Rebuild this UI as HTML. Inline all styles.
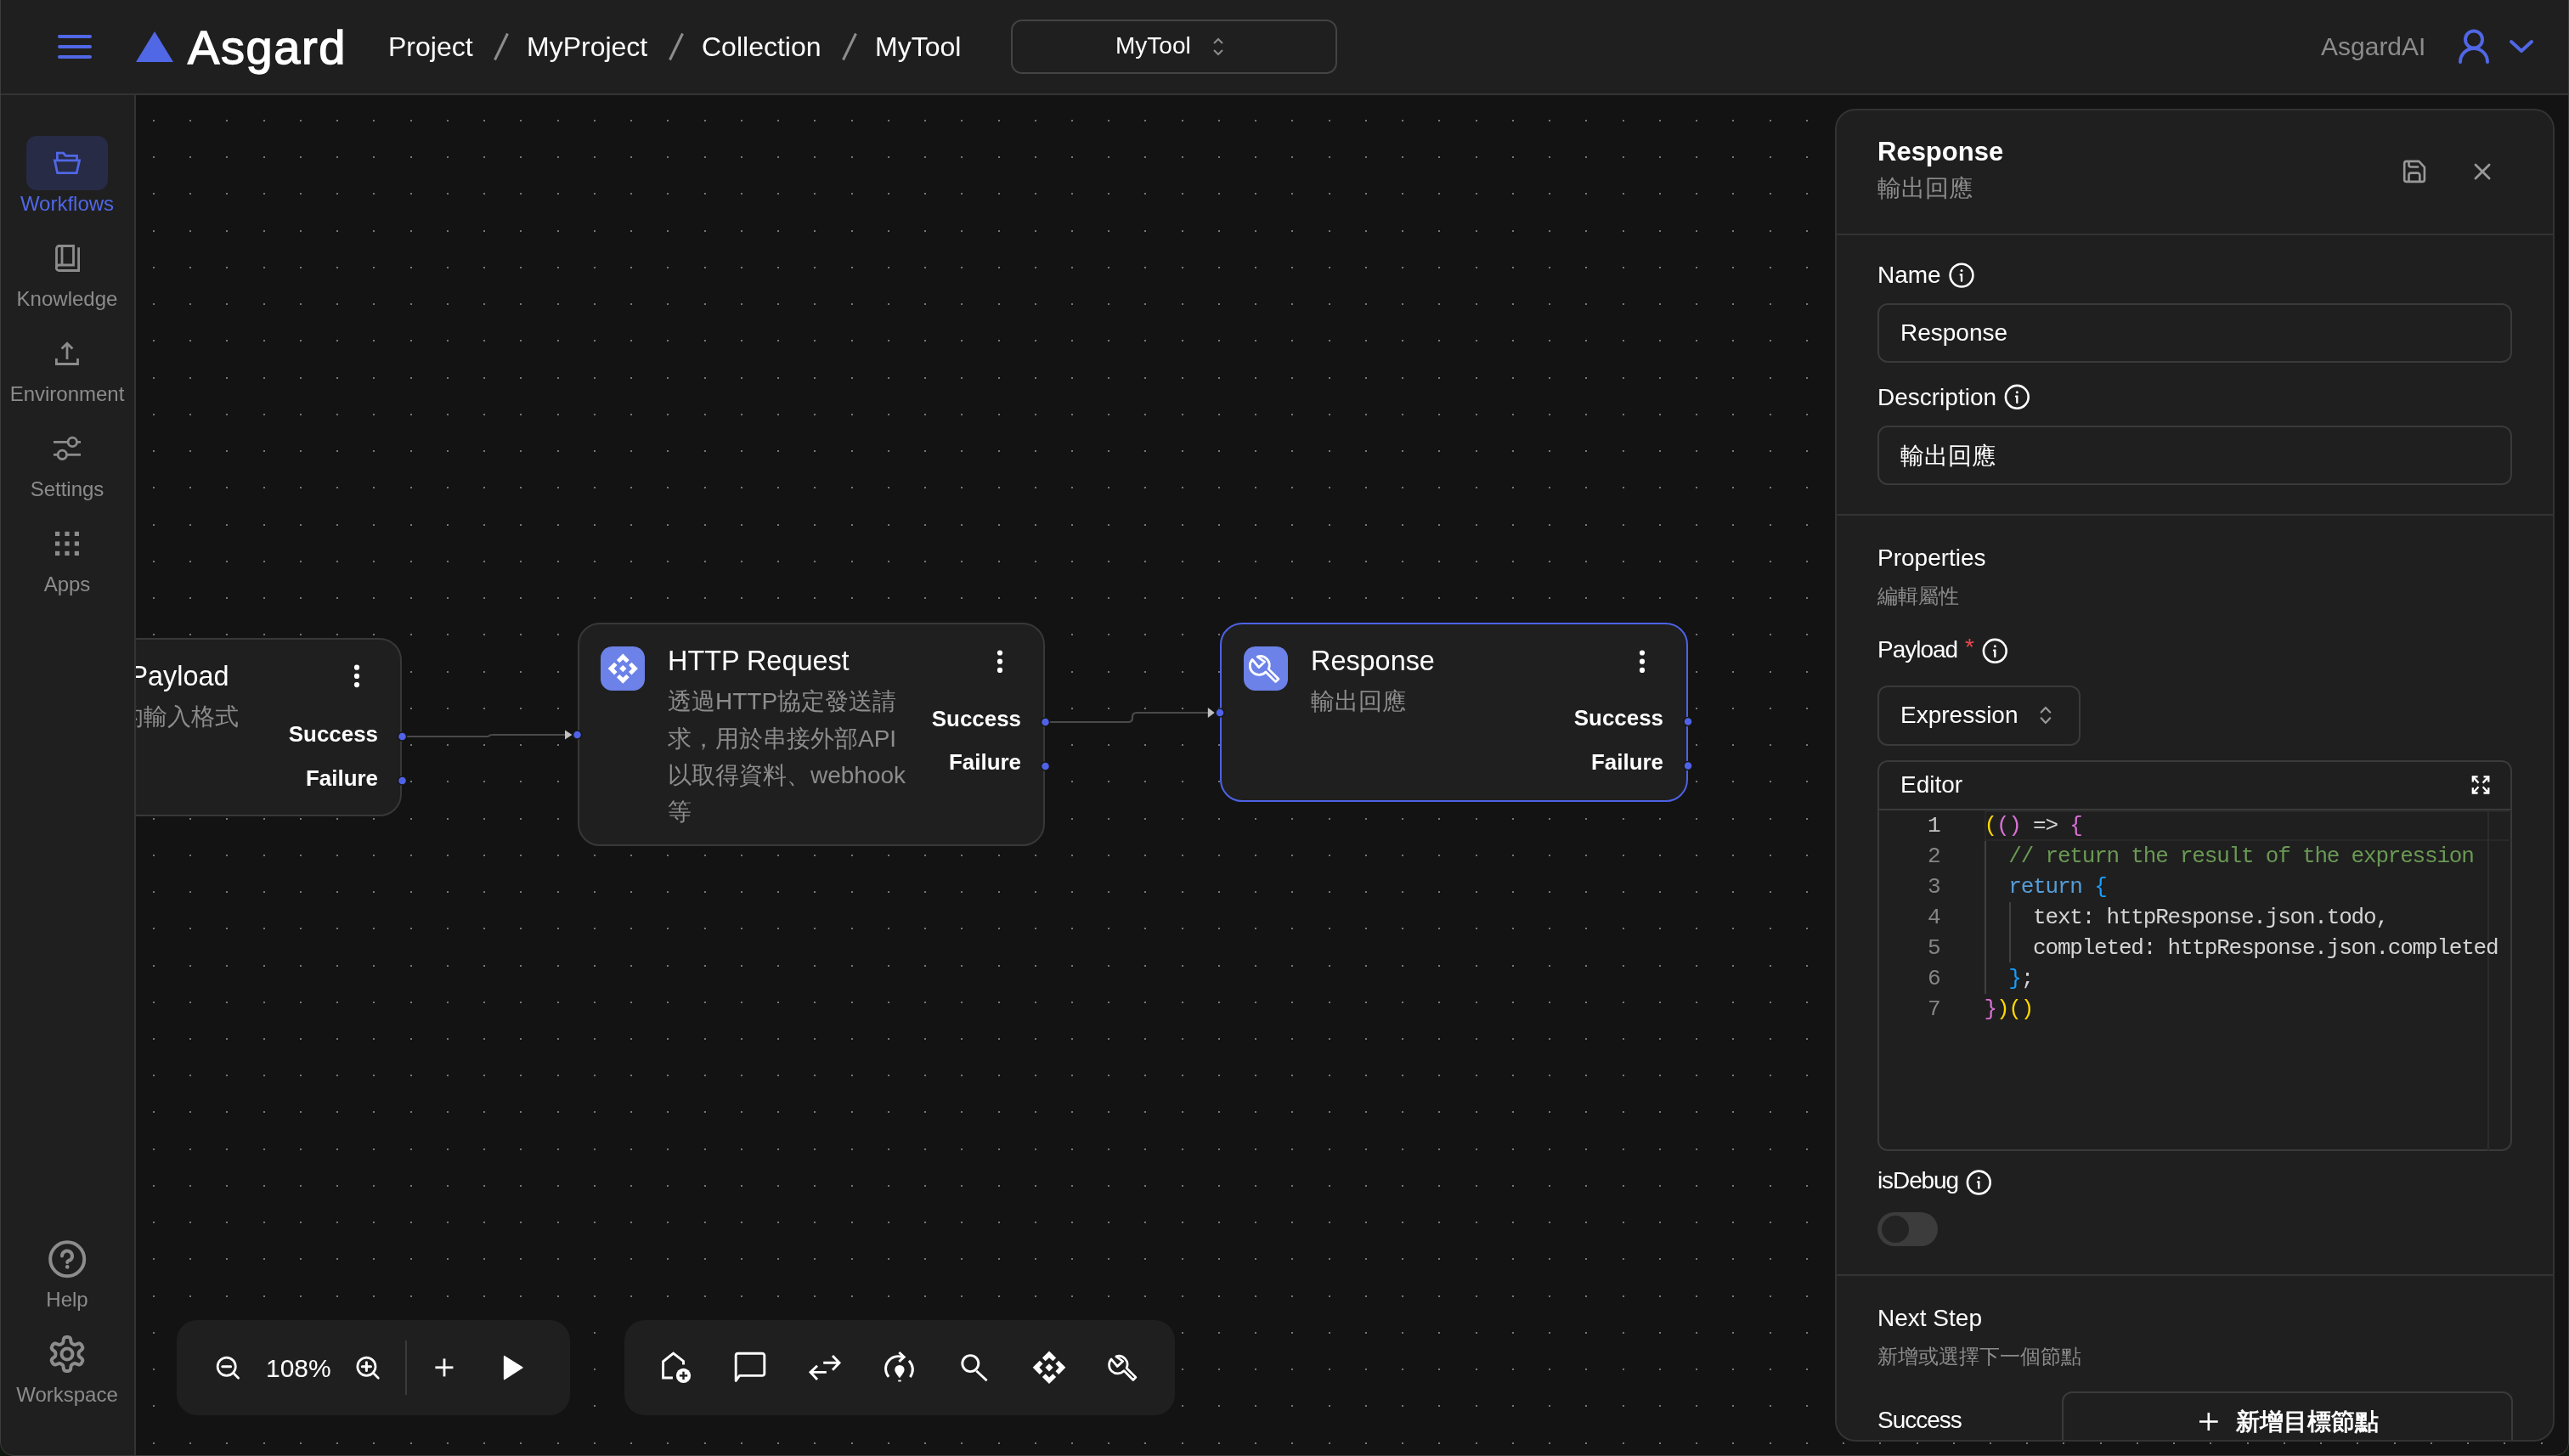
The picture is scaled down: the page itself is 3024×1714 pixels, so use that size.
<!DOCTYPE html>
<html><head><meta charset="utf-8">
<style>
html,body{margin:0;padding:0;}
body{width:3024px;height:1714px;overflow:hidden;background:#111a10;font-family:"Liberation Sans",sans-serif;color:#fff;position:relative;}
#win{position:absolute;left:0;top:0;width:3024px;height:1714px;overflow:hidden;background:#131313;border-radius:0 0 16px 16px;will-change:transform;-webkit-font-smoothing:antialiased;}
.a{position:absolute;}
.t{position:absolute;line-height:1;white-space:nowrap;}
svg{position:absolute;overflow:visible;}
#hdr{left:0;top:0;width:3024px;height:110px;background:#1f1f1f;border-bottom:2px solid #333;}
#side{left:0;top:112px;width:158px;height:1602px;background:#1f1f1f;border-right:2px solid #333;}
#frameL{left:0;top:0;width:1px;height:1714px;background:#3a3a3a;}
#frameR{left:3023px;top:0;width:1px;height:1714px;background:#3a3a3a;}
.g{color:#8c8c8c;}
</style></head><body><div id="win">

<!-- canvas dots -->
<svg class="a" style="left:0;top:0" width="3024" height="1714"><path d="M180 141h2v2h-2zM223 141h2v2h-2zM266 141h2v2h-2zM310 141h2v2h-2zM353 141h2v2h-2zM396 141h2v2h-2zM439 141h2v2h-2zM483 141h2v2h-2zM526 141h2v2h-2zM569 141h2v2h-2zM612 141h2v2h-2zM656 141h2v2h-2zM699 141h2v2h-2zM742 141h2v2h-2zM785 141h2v2h-2zM829 141h2v2h-2zM872 141h2v2h-2zM915 141h2v2h-2zM958 141h2v2h-2zM1002 141h2v2h-2zM1045 141h2v2h-2zM1088 141h2v2h-2zM1131 141h2v2h-2zM1175 141h2v2h-2zM1218 141h2v2h-2zM1261 141h2v2h-2zM1304 141h2v2h-2zM1347 141h2v2h-2zM1391 141h2v2h-2zM1434 141h2v2h-2zM1477 141h2v2h-2zM1520 141h2v2h-2zM1564 141h2v2h-2zM1607 141h2v2h-2zM1650 141h2v2h-2zM1693 141h2v2h-2zM1737 141h2v2h-2zM1780 141h2v2h-2zM1823 141h2v2h-2zM1866 141h2v2h-2zM1910 141h2v2h-2zM1953 141h2v2h-2zM1996 141h2v2h-2zM2039 141h2v2h-2zM2083 141h2v2h-2zM2126 141h2v2h-2zM2169 141h2v2h-2zM2212 141h2v2h-2zM2256 141h2v2h-2zM2299 141h2v2h-2zM2342 141h2v2h-2zM2385 141h2v2h-2zM2428 141h2v2h-2zM2472 141h2v2h-2zM2515 141h2v2h-2zM2558 141h2v2h-2zM2601 141h2v2h-2zM2645 141h2v2h-2zM2688 141h2v2h-2zM2731 141h2v2h-2zM2774 141h2v2h-2zM2818 141h2v2h-2zM2861 141h2v2h-2zM2904 141h2v2h-2zM2947 141h2v2h-2zM2991 141h2v2h-2zM180 184h2v2h-2zM223 184h2v2h-2zM266 184h2v2h-2zM310 184h2v2h-2zM353 184h2v2h-2zM396 184h2v2h-2zM439 184h2v2h-2zM483 184h2v2h-2zM526 184h2v2h-2zM569 184h2v2h-2zM612 184h2v2h-2zM656 184h2v2h-2zM699 184h2v2h-2zM742 184h2v2h-2zM785 184h2v2h-2zM829 184h2v2h-2zM872 184h2v2h-2zM915 184h2v2h-2zM958 184h2v2h-2zM1002 184h2v2h-2zM1045 184h2v2h-2zM1088 184h2v2h-2zM1131 184h2v2h-2zM1175 184h2v2h-2zM1218 184h2v2h-2zM1261 184h2v2h-2zM1304 184h2v2h-2zM1347 184h2v2h-2zM1391 184h2v2h-2zM1434 184h2v2h-2zM1477 184h2v2h-2zM1520 184h2v2h-2zM1564 184h2v2h-2zM1607 184h2v2h-2zM1650 184h2v2h-2zM1693 184h2v2h-2zM1737 184h2v2h-2zM1780 184h2v2h-2zM1823 184h2v2h-2zM1866 184h2v2h-2zM1910 184h2v2h-2zM1953 184h2v2h-2zM1996 184h2v2h-2zM2039 184h2v2h-2zM2083 184h2v2h-2zM2126 184h2v2h-2zM2169 184h2v2h-2zM2212 184h2v2h-2zM2256 184h2v2h-2zM2299 184h2v2h-2zM2342 184h2v2h-2zM2385 184h2v2h-2zM2428 184h2v2h-2zM2472 184h2v2h-2zM2515 184h2v2h-2zM2558 184h2v2h-2zM2601 184h2v2h-2zM2645 184h2v2h-2zM2688 184h2v2h-2zM2731 184h2v2h-2zM2774 184h2v2h-2zM2818 184h2v2h-2zM2861 184h2v2h-2zM2904 184h2v2h-2zM2947 184h2v2h-2zM2991 184h2v2h-2zM180 227h2v2h-2zM223 227h2v2h-2zM266 227h2v2h-2zM310 227h2v2h-2zM353 227h2v2h-2zM396 227h2v2h-2zM439 227h2v2h-2zM483 227h2v2h-2zM526 227h2v2h-2zM569 227h2v2h-2zM612 227h2v2h-2zM656 227h2v2h-2zM699 227h2v2h-2zM742 227h2v2h-2zM785 227h2v2h-2zM829 227h2v2h-2zM872 227h2v2h-2zM915 227h2v2h-2zM958 227h2v2h-2zM1002 227h2v2h-2zM1045 227h2v2h-2zM1088 227h2v2h-2zM1131 227h2v2h-2zM1175 227h2v2h-2zM1218 227h2v2h-2zM1261 227h2v2h-2zM1304 227h2v2h-2zM1347 227h2v2h-2zM1391 227h2v2h-2zM1434 227h2v2h-2zM1477 227h2v2h-2zM1520 227h2v2h-2zM1564 227h2v2h-2zM1607 227h2v2h-2zM1650 227h2v2h-2zM1693 227h2v2h-2zM1737 227h2v2h-2zM1780 227h2v2h-2zM1823 227h2v2h-2zM1866 227h2v2h-2zM1910 227h2v2h-2zM1953 227h2v2h-2zM1996 227h2v2h-2zM2039 227h2v2h-2zM2083 227h2v2h-2zM2126 227h2v2h-2zM2169 227h2v2h-2zM2212 227h2v2h-2zM2256 227h2v2h-2zM2299 227h2v2h-2zM2342 227h2v2h-2zM2385 227h2v2h-2zM2428 227h2v2h-2zM2472 227h2v2h-2zM2515 227h2v2h-2zM2558 227h2v2h-2zM2601 227h2v2h-2zM2645 227h2v2h-2zM2688 227h2v2h-2zM2731 227h2v2h-2zM2774 227h2v2h-2zM2818 227h2v2h-2zM2861 227h2v2h-2zM2904 227h2v2h-2zM2947 227h2v2h-2zM2991 227h2v2h-2zM180 271h2v2h-2zM223 271h2v2h-2zM266 271h2v2h-2zM310 271h2v2h-2zM353 271h2v2h-2zM396 271h2v2h-2zM439 271h2v2h-2zM483 271h2v2h-2zM526 271h2v2h-2zM569 271h2v2h-2zM612 271h2v2h-2zM656 271h2v2h-2zM699 271h2v2h-2zM742 271h2v2h-2zM785 271h2v2h-2zM829 271h2v2h-2zM872 271h2v2h-2zM915 271h2v2h-2zM958 271h2v2h-2zM1002 271h2v2h-2zM1045 271h2v2h-2zM1088 271h2v2h-2zM1131 271h2v2h-2zM1175 271h2v2h-2zM1218 271h2v2h-2zM1261 271h2v2h-2zM1304 271h2v2h-2zM1347 271h2v2h-2zM1391 271h2v2h-2zM1434 271h2v2h-2zM1477 271h2v2h-2zM1520 271h2v2h-2zM1564 271h2v2h-2zM1607 271h2v2h-2zM1650 271h2v2h-2zM1693 271h2v2h-2zM1737 271h2v2h-2zM1780 271h2v2h-2zM1823 271h2v2h-2zM1866 271h2v2h-2zM1910 271h2v2h-2zM1953 271h2v2h-2zM1996 271h2v2h-2zM2039 271h2v2h-2zM2083 271h2v2h-2zM2126 271h2v2h-2zM2169 271h2v2h-2zM2212 271h2v2h-2zM2256 271h2v2h-2zM2299 271h2v2h-2zM2342 271h2v2h-2zM2385 271h2v2h-2zM2428 271h2v2h-2zM2472 271h2v2h-2zM2515 271h2v2h-2zM2558 271h2v2h-2zM2601 271h2v2h-2zM2645 271h2v2h-2zM2688 271h2v2h-2zM2731 271h2v2h-2zM2774 271h2v2h-2zM2818 271h2v2h-2zM2861 271h2v2h-2zM2904 271h2v2h-2zM2947 271h2v2h-2zM2991 271h2v2h-2zM180 314h2v2h-2zM223 314h2v2h-2zM266 314h2v2h-2zM310 314h2v2h-2zM353 314h2v2h-2zM396 314h2v2h-2zM439 314h2v2h-2zM483 314h2v2h-2zM526 314h2v2h-2zM569 314h2v2h-2zM612 314h2v2h-2zM656 314h2v2h-2zM699 314h2v2h-2zM742 314h2v2h-2zM785 314h2v2h-2zM829 314h2v2h-2zM872 314h2v2h-2zM915 314h2v2h-2zM958 314h2v2h-2zM1002 314h2v2h-2zM1045 314h2v2h-2zM1088 314h2v2h-2zM1131 314h2v2h-2zM1175 314h2v2h-2zM1218 314h2v2h-2zM1261 314h2v2h-2zM1304 314h2v2h-2zM1347 314h2v2h-2zM1391 314h2v2h-2zM1434 314h2v2h-2zM1477 314h2v2h-2zM1520 314h2v2h-2zM1564 314h2v2h-2zM1607 314h2v2h-2zM1650 314h2v2h-2zM1693 314h2v2h-2zM1737 314h2v2h-2zM1780 314h2v2h-2zM1823 314h2v2h-2zM1866 314h2v2h-2zM1910 314h2v2h-2zM1953 314h2v2h-2zM1996 314h2v2h-2zM2039 314h2v2h-2zM2083 314h2v2h-2zM2126 314h2v2h-2zM2169 314h2v2h-2zM2212 314h2v2h-2zM2256 314h2v2h-2zM2299 314h2v2h-2zM2342 314h2v2h-2zM2385 314h2v2h-2zM2428 314h2v2h-2zM2472 314h2v2h-2zM2515 314h2v2h-2zM2558 314h2v2h-2zM2601 314h2v2h-2zM2645 314h2v2h-2zM2688 314h2v2h-2zM2731 314h2v2h-2zM2774 314h2v2h-2zM2818 314h2v2h-2zM2861 314h2v2h-2zM2904 314h2v2h-2zM2947 314h2v2h-2zM2991 314h2v2h-2zM180 357h2v2h-2zM223 357h2v2h-2zM266 357h2v2h-2zM310 357h2v2h-2zM353 357h2v2h-2zM396 357h2v2h-2zM439 357h2v2h-2zM483 357h2v2h-2zM526 357h2v2h-2zM569 357h2v2h-2zM612 357h2v2h-2zM656 357h2v2h-2zM699 357h2v2h-2zM742 357h2v2h-2zM785 357h2v2h-2zM829 357h2v2h-2zM872 357h2v2h-2zM915 357h2v2h-2zM958 357h2v2h-2zM1002 357h2v2h-2zM1045 357h2v2h-2zM1088 357h2v2h-2zM1131 357h2v2h-2zM1175 357h2v2h-2zM1218 357h2v2h-2zM1261 357h2v2h-2zM1304 357h2v2h-2zM1347 357h2v2h-2zM1391 357h2v2h-2zM1434 357h2v2h-2zM1477 357h2v2h-2zM1520 357h2v2h-2zM1564 357h2v2h-2zM1607 357h2v2h-2zM1650 357h2v2h-2zM1693 357h2v2h-2zM1737 357h2v2h-2zM1780 357h2v2h-2zM1823 357h2v2h-2zM1866 357h2v2h-2zM1910 357h2v2h-2zM1953 357h2v2h-2zM1996 357h2v2h-2zM2039 357h2v2h-2zM2083 357h2v2h-2zM2126 357h2v2h-2zM2169 357h2v2h-2zM2212 357h2v2h-2zM2256 357h2v2h-2zM2299 357h2v2h-2zM2342 357h2v2h-2zM2385 357h2v2h-2zM2428 357h2v2h-2zM2472 357h2v2h-2zM2515 357h2v2h-2zM2558 357h2v2h-2zM2601 357h2v2h-2zM2645 357h2v2h-2zM2688 357h2v2h-2zM2731 357h2v2h-2zM2774 357h2v2h-2zM2818 357h2v2h-2zM2861 357h2v2h-2zM2904 357h2v2h-2zM2947 357h2v2h-2zM2991 357h2v2h-2zM180 400h2v2h-2zM223 400h2v2h-2zM266 400h2v2h-2zM310 400h2v2h-2zM353 400h2v2h-2zM396 400h2v2h-2zM439 400h2v2h-2zM483 400h2v2h-2zM526 400h2v2h-2zM569 400h2v2h-2zM612 400h2v2h-2zM656 400h2v2h-2zM699 400h2v2h-2zM742 400h2v2h-2zM785 400h2v2h-2zM829 400h2v2h-2zM872 400h2v2h-2zM915 400h2v2h-2zM958 400h2v2h-2zM1002 400h2v2h-2zM1045 400h2v2h-2zM1088 400h2v2h-2zM1131 400h2v2h-2zM1175 400h2v2h-2zM1218 400h2v2h-2zM1261 400h2v2h-2zM1304 400h2v2h-2zM1347 400h2v2h-2zM1391 400h2v2h-2zM1434 400h2v2h-2zM1477 400h2v2h-2zM1520 400h2v2h-2zM1564 400h2v2h-2zM1607 400h2v2h-2zM1650 400h2v2h-2zM1693 400h2v2h-2zM1737 400h2v2h-2zM1780 400h2v2h-2zM1823 400h2v2h-2zM1866 400h2v2h-2zM1910 400h2v2h-2zM1953 400h2v2h-2zM1996 400h2v2h-2zM2039 400h2v2h-2zM2083 400h2v2h-2zM2126 400h2v2h-2zM2169 400h2v2h-2zM2212 400h2v2h-2zM2256 400h2v2h-2zM2299 400h2v2h-2zM2342 400h2v2h-2zM2385 400h2v2h-2zM2428 400h2v2h-2zM2472 400h2v2h-2zM2515 400h2v2h-2zM2558 400h2v2h-2zM2601 400h2v2h-2zM2645 400h2v2h-2zM2688 400h2v2h-2zM2731 400h2v2h-2zM2774 400h2v2h-2zM2818 400h2v2h-2zM2861 400h2v2h-2zM2904 400h2v2h-2zM2947 400h2v2h-2zM2991 400h2v2h-2zM180 444h2v2h-2zM223 444h2v2h-2zM266 444h2v2h-2zM310 444h2v2h-2zM353 444h2v2h-2zM396 444h2v2h-2zM439 444h2v2h-2zM483 444h2v2h-2zM526 444h2v2h-2zM569 444h2v2h-2zM612 444h2v2h-2zM656 444h2v2h-2zM699 444h2v2h-2zM742 444h2v2h-2zM785 444h2v2h-2zM829 444h2v2h-2zM872 444h2v2h-2zM915 444h2v2h-2zM958 444h2v2h-2zM1002 444h2v2h-2zM1045 444h2v2h-2zM1088 444h2v2h-2zM1131 444h2v2h-2zM1175 444h2v2h-2zM1218 444h2v2h-2zM1261 444h2v2h-2zM1304 444h2v2h-2zM1347 444h2v2h-2zM1391 444h2v2h-2zM1434 444h2v2h-2zM1477 444h2v2h-2zM1520 444h2v2h-2zM1564 444h2v2h-2zM1607 444h2v2h-2zM1650 444h2v2h-2zM1693 444h2v2h-2zM1737 444h2v2h-2zM1780 444h2v2h-2zM1823 444h2v2h-2zM1866 444h2v2h-2zM1910 444h2v2h-2zM1953 444h2v2h-2zM1996 444h2v2h-2zM2039 444h2v2h-2zM2083 444h2v2h-2zM2126 444h2v2h-2zM2169 444h2v2h-2zM2212 444h2v2h-2zM2256 444h2v2h-2zM2299 444h2v2h-2zM2342 444h2v2h-2zM2385 444h2v2h-2zM2428 444h2v2h-2zM2472 444h2v2h-2zM2515 444h2v2h-2zM2558 444h2v2h-2zM2601 444h2v2h-2zM2645 444h2v2h-2zM2688 444h2v2h-2zM2731 444h2v2h-2zM2774 444h2v2h-2zM2818 444h2v2h-2zM2861 444h2v2h-2zM2904 444h2v2h-2zM2947 444h2v2h-2zM2991 444h2v2h-2zM180 487h2v2h-2zM223 487h2v2h-2zM266 487h2v2h-2zM310 487h2v2h-2zM353 487h2v2h-2zM396 487h2v2h-2zM439 487h2v2h-2zM483 487h2v2h-2zM526 487h2v2h-2zM569 487h2v2h-2zM612 487h2v2h-2zM656 487h2v2h-2zM699 487h2v2h-2zM742 487h2v2h-2zM785 487h2v2h-2zM829 487h2v2h-2zM872 487h2v2h-2zM915 487h2v2h-2zM958 487h2v2h-2zM1002 487h2v2h-2zM1045 487h2v2h-2zM1088 487h2v2h-2zM1131 487h2v2h-2zM1175 487h2v2h-2zM1218 487h2v2h-2zM1261 487h2v2h-2zM1304 487h2v2h-2zM1347 487h2v2h-2zM1391 487h2v2h-2zM1434 487h2v2h-2zM1477 487h2v2h-2zM1520 487h2v2h-2zM1564 487h2v2h-2zM1607 487h2v2h-2zM1650 487h2v2h-2zM1693 487h2v2h-2zM1737 487h2v2h-2zM1780 487h2v2h-2zM1823 487h2v2h-2zM1866 487h2v2h-2zM1910 487h2v2h-2zM1953 487h2v2h-2zM1996 487h2v2h-2zM2039 487h2v2h-2zM2083 487h2v2h-2zM2126 487h2v2h-2zM2169 487h2v2h-2zM2212 487h2v2h-2zM2256 487h2v2h-2zM2299 487h2v2h-2zM2342 487h2v2h-2zM2385 487h2v2h-2zM2428 487h2v2h-2zM2472 487h2v2h-2zM2515 487h2v2h-2zM2558 487h2v2h-2zM2601 487h2v2h-2zM2645 487h2v2h-2zM2688 487h2v2h-2zM2731 487h2v2h-2zM2774 487h2v2h-2zM2818 487h2v2h-2zM2861 487h2v2h-2zM2904 487h2v2h-2zM2947 487h2v2h-2zM2991 487h2v2h-2zM180 530h2v2h-2zM223 530h2v2h-2zM266 530h2v2h-2zM310 530h2v2h-2zM353 530h2v2h-2zM396 530h2v2h-2zM439 530h2v2h-2zM483 530h2v2h-2zM526 530h2v2h-2zM569 530h2v2h-2zM612 530h2v2h-2zM656 530h2v2h-2zM699 530h2v2h-2zM742 530h2v2h-2zM785 530h2v2h-2zM829 530h2v2h-2zM872 530h2v2h-2zM915 530h2v2h-2zM958 530h2v2h-2zM1002 530h2v2h-2zM1045 530h2v2h-2zM1088 530h2v2h-2zM1131 530h2v2h-2zM1175 530h2v2h-2zM1218 530h2v2h-2zM1261 530h2v2h-2zM1304 530h2v2h-2zM1347 530h2v2h-2zM1391 530h2v2h-2zM1434 530h2v2h-2zM1477 530h2v2h-2zM1520 530h2v2h-2zM1564 530h2v2h-2zM1607 530h2v2h-2zM1650 530h2v2h-2zM1693 530h2v2h-2zM1737 530h2v2h-2zM1780 530h2v2h-2zM1823 530h2v2h-2zM1866 530h2v2h-2zM1910 530h2v2h-2zM1953 530h2v2h-2zM1996 530h2v2h-2zM2039 530h2v2h-2zM2083 530h2v2h-2zM2126 530h2v2h-2zM2169 530h2v2h-2zM2212 530h2v2h-2zM2256 530h2v2h-2zM2299 530h2v2h-2zM2342 530h2v2h-2zM2385 530h2v2h-2zM2428 530h2v2h-2zM2472 530h2v2h-2zM2515 530h2v2h-2zM2558 530h2v2h-2zM2601 530h2v2h-2zM2645 530h2v2h-2zM2688 530h2v2h-2zM2731 530h2v2h-2zM2774 530h2v2h-2zM2818 530h2v2h-2zM2861 530h2v2h-2zM2904 530h2v2h-2zM2947 530h2v2h-2zM2991 530h2v2h-2zM180 573h2v2h-2zM223 573h2v2h-2zM266 573h2v2h-2zM310 573h2v2h-2zM353 573h2v2h-2zM396 573h2v2h-2zM439 573h2v2h-2zM483 573h2v2h-2zM526 573h2v2h-2zM569 573h2v2h-2zM612 573h2v2h-2zM656 573h2v2h-2zM699 573h2v2h-2zM742 573h2v2h-2zM785 573h2v2h-2zM829 573h2v2h-2zM872 573h2v2h-2zM915 573h2v2h-2zM958 573h2v2h-2zM1002 573h2v2h-2zM1045 573h2v2h-2zM1088 573h2v2h-2zM1131 573h2v2h-2zM1175 573h2v2h-2zM1218 573h2v2h-2zM1261 573h2v2h-2zM1304 573h2v2h-2zM1347 573h2v2h-2zM1391 573h2v2h-2zM1434 573h2v2h-2zM1477 573h2v2h-2zM1520 573h2v2h-2zM1564 573h2v2h-2zM1607 573h2v2h-2zM1650 573h2v2h-2zM1693 573h2v2h-2zM1737 573h2v2h-2zM1780 573h2v2h-2zM1823 573h2v2h-2zM1866 573h2v2h-2zM1910 573h2v2h-2zM1953 573h2v2h-2zM1996 573h2v2h-2zM2039 573h2v2h-2zM2083 573h2v2h-2zM2126 573h2v2h-2zM2169 573h2v2h-2zM2212 573h2v2h-2zM2256 573h2v2h-2zM2299 573h2v2h-2zM2342 573h2v2h-2zM2385 573h2v2h-2zM2428 573h2v2h-2zM2472 573h2v2h-2zM2515 573h2v2h-2zM2558 573h2v2h-2zM2601 573h2v2h-2zM2645 573h2v2h-2zM2688 573h2v2h-2zM2731 573h2v2h-2zM2774 573h2v2h-2zM2818 573h2v2h-2zM2861 573h2v2h-2zM2904 573h2v2h-2zM2947 573h2v2h-2zM2991 573h2v2h-2zM180 617h2v2h-2zM223 617h2v2h-2zM266 617h2v2h-2zM310 617h2v2h-2zM353 617h2v2h-2zM396 617h2v2h-2zM439 617h2v2h-2zM483 617h2v2h-2zM526 617h2v2h-2zM569 617h2v2h-2zM612 617h2v2h-2zM656 617h2v2h-2zM699 617h2v2h-2zM742 617h2v2h-2zM785 617h2v2h-2zM829 617h2v2h-2zM872 617h2v2h-2zM915 617h2v2h-2zM958 617h2v2h-2zM1002 617h2v2h-2zM1045 617h2v2h-2zM1088 617h2v2h-2zM1131 617h2v2h-2zM1175 617h2v2h-2zM1218 617h2v2h-2zM1261 617h2v2h-2zM1304 617h2v2h-2zM1347 617h2v2h-2zM1391 617h2v2h-2zM1434 617h2v2h-2zM1477 617h2v2h-2zM1520 617h2v2h-2zM1564 617h2v2h-2zM1607 617h2v2h-2zM1650 617h2v2h-2zM1693 617h2v2h-2zM1737 617h2v2h-2zM1780 617h2v2h-2zM1823 617h2v2h-2zM1866 617h2v2h-2zM1910 617h2v2h-2zM1953 617h2v2h-2zM1996 617h2v2h-2zM2039 617h2v2h-2zM2083 617h2v2h-2zM2126 617h2v2h-2zM2169 617h2v2h-2zM2212 617h2v2h-2zM2256 617h2v2h-2zM2299 617h2v2h-2zM2342 617h2v2h-2zM2385 617h2v2h-2zM2428 617h2v2h-2zM2472 617h2v2h-2zM2515 617h2v2h-2zM2558 617h2v2h-2zM2601 617h2v2h-2zM2645 617h2v2h-2zM2688 617h2v2h-2zM2731 617h2v2h-2zM2774 617h2v2h-2zM2818 617h2v2h-2zM2861 617h2v2h-2zM2904 617h2v2h-2zM2947 617h2v2h-2zM2991 617h2v2h-2zM180 660h2v2h-2zM223 660h2v2h-2zM266 660h2v2h-2zM310 660h2v2h-2zM353 660h2v2h-2zM396 660h2v2h-2zM439 660h2v2h-2zM483 660h2v2h-2zM526 660h2v2h-2zM569 660h2v2h-2zM612 660h2v2h-2zM656 660h2v2h-2zM699 660h2v2h-2zM742 660h2v2h-2zM785 660h2v2h-2zM829 660h2v2h-2zM872 660h2v2h-2zM915 660h2v2h-2zM958 660h2v2h-2zM1002 660h2v2h-2zM1045 660h2v2h-2zM1088 660h2v2h-2zM1131 660h2v2h-2zM1175 660h2v2h-2zM1218 660h2v2h-2zM1261 660h2v2h-2zM1304 660h2v2h-2zM1347 660h2v2h-2zM1391 660h2v2h-2zM1434 660h2v2h-2zM1477 660h2v2h-2zM1520 660h2v2h-2zM1564 660h2v2h-2zM1607 660h2v2h-2zM1650 660h2v2h-2zM1693 660h2v2h-2zM1737 660h2v2h-2zM1780 660h2v2h-2zM1823 660h2v2h-2zM1866 660h2v2h-2zM1910 660h2v2h-2zM1953 660h2v2h-2zM1996 660h2v2h-2zM2039 660h2v2h-2zM2083 660h2v2h-2zM2126 660h2v2h-2zM2169 660h2v2h-2zM2212 660h2v2h-2zM2256 660h2v2h-2zM2299 660h2v2h-2zM2342 660h2v2h-2zM2385 660h2v2h-2zM2428 660h2v2h-2zM2472 660h2v2h-2zM2515 660h2v2h-2zM2558 660h2v2h-2zM2601 660h2v2h-2zM2645 660h2v2h-2zM2688 660h2v2h-2zM2731 660h2v2h-2zM2774 660h2v2h-2zM2818 660h2v2h-2zM2861 660h2v2h-2zM2904 660h2v2h-2zM2947 660h2v2h-2zM2991 660h2v2h-2zM180 703h2v2h-2zM223 703h2v2h-2zM266 703h2v2h-2zM310 703h2v2h-2zM353 703h2v2h-2zM396 703h2v2h-2zM439 703h2v2h-2zM483 703h2v2h-2zM526 703h2v2h-2zM569 703h2v2h-2zM612 703h2v2h-2zM656 703h2v2h-2zM699 703h2v2h-2zM742 703h2v2h-2zM785 703h2v2h-2zM829 703h2v2h-2zM872 703h2v2h-2zM915 703h2v2h-2zM958 703h2v2h-2zM1002 703h2v2h-2zM1045 703h2v2h-2zM1088 703h2v2h-2zM1131 703h2v2h-2zM1175 703h2v2h-2zM1218 703h2v2h-2zM1261 703h2v2h-2zM1304 703h2v2h-2zM1347 703h2v2h-2zM1391 703h2v2h-2zM1434 703h2v2h-2zM1477 703h2v2h-2zM1520 703h2v2h-2zM1564 703h2v2h-2zM1607 703h2v2h-2zM1650 703h2v2h-2zM1693 703h2v2h-2zM1737 703h2v2h-2zM1780 703h2v2h-2zM1823 703h2v2h-2zM1866 703h2v2h-2zM1910 703h2v2h-2zM1953 703h2v2h-2zM1996 703h2v2h-2zM2039 703h2v2h-2zM2083 703h2v2h-2zM2126 703h2v2h-2zM2169 703h2v2h-2zM2212 703h2v2h-2zM2256 703h2v2h-2zM2299 703h2v2h-2zM2342 703h2v2h-2zM2385 703h2v2h-2zM2428 703h2v2h-2zM2472 703h2v2h-2zM2515 703h2v2h-2zM2558 703h2v2h-2zM2601 703h2v2h-2zM2645 703h2v2h-2zM2688 703h2v2h-2zM2731 703h2v2h-2zM2774 703h2v2h-2zM2818 703h2v2h-2zM2861 703h2v2h-2zM2904 703h2v2h-2zM2947 703h2v2h-2zM2991 703h2v2h-2zM180 746h2v2h-2zM223 746h2v2h-2zM266 746h2v2h-2zM310 746h2v2h-2zM353 746h2v2h-2zM396 746h2v2h-2zM439 746h2v2h-2zM483 746h2v2h-2zM526 746h2v2h-2zM569 746h2v2h-2zM612 746h2v2h-2zM656 746h2v2h-2zM699 746h2v2h-2zM742 746h2v2h-2zM785 746h2v2h-2zM829 746h2v2h-2zM872 746h2v2h-2zM915 746h2v2h-2zM958 746h2v2h-2zM1002 746h2v2h-2zM1045 746h2v2h-2zM1088 746h2v2h-2zM1131 746h2v2h-2zM1175 746h2v2h-2zM1218 746h2v2h-2zM1261 746h2v2h-2zM1304 746h2v2h-2zM1347 746h2v2h-2zM1391 746h2v2h-2zM1434 746h2v2h-2zM1477 746h2v2h-2zM1520 746h2v2h-2zM1564 746h2v2h-2zM1607 746h2v2h-2zM1650 746h2v2h-2zM1693 746h2v2h-2zM1737 746h2v2h-2zM1780 746h2v2h-2zM1823 746h2v2h-2zM1866 746h2v2h-2zM1910 746h2v2h-2zM1953 746h2v2h-2zM1996 746h2v2h-2zM2039 746h2v2h-2zM2083 746h2v2h-2zM2126 746h2v2h-2zM2169 746h2v2h-2zM2212 746h2v2h-2zM2256 746h2v2h-2zM2299 746h2v2h-2zM2342 746h2v2h-2zM2385 746h2v2h-2zM2428 746h2v2h-2zM2472 746h2v2h-2zM2515 746h2v2h-2zM2558 746h2v2h-2zM2601 746h2v2h-2zM2645 746h2v2h-2zM2688 746h2v2h-2zM2731 746h2v2h-2zM2774 746h2v2h-2zM2818 746h2v2h-2zM2861 746h2v2h-2zM2904 746h2v2h-2zM2947 746h2v2h-2zM2991 746h2v2h-2zM180 790h2v2h-2zM223 790h2v2h-2zM266 790h2v2h-2zM310 790h2v2h-2zM353 790h2v2h-2zM396 790h2v2h-2zM439 790h2v2h-2zM483 790h2v2h-2zM526 790h2v2h-2zM569 790h2v2h-2zM612 790h2v2h-2zM656 790h2v2h-2zM699 790h2v2h-2zM742 790h2v2h-2zM785 790h2v2h-2zM829 790h2v2h-2zM872 790h2v2h-2zM915 790h2v2h-2zM958 790h2v2h-2zM1002 790h2v2h-2zM1045 790h2v2h-2zM1088 790h2v2h-2zM1131 790h2v2h-2zM1175 790h2v2h-2zM1218 790h2v2h-2zM1261 790h2v2h-2zM1304 790h2v2h-2zM1347 790h2v2h-2zM1391 790h2v2h-2zM1434 790h2v2h-2zM1477 790h2v2h-2zM1520 790h2v2h-2zM1564 790h2v2h-2zM1607 790h2v2h-2zM1650 790h2v2h-2zM1693 790h2v2h-2zM1737 790h2v2h-2zM1780 790h2v2h-2zM1823 790h2v2h-2zM1866 790h2v2h-2zM1910 790h2v2h-2zM1953 790h2v2h-2zM1996 790h2v2h-2zM2039 790h2v2h-2zM2083 790h2v2h-2zM2126 790h2v2h-2zM2169 790h2v2h-2zM2212 790h2v2h-2zM2256 790h2v2h-2zM2299 790h2v2h-2zM2342 790h2v2h-2zM2385 790h2v2h-2zM2428 790h2v2h-2zM2472 790h2v2h-2zM2515 790h2v2h-2zM2558 790h2v2h-2zM2601 790h2v2h-2zM2645 790h2v2h-2zM2688 790h2v2h-2zM2731 790h2v2h-2zM2774 790h2v2h-2zM2818 790h2v2h-2zM2861 790h2v2h-2zM2904 790h2v2h-2zM2947 790h2v2h-2zM2991 790h2v2h-2zM180 833h2v2h-2zM223 833h2v2h-2zM266 833h2v2h-2zM310 833h2v2h-2zM353 833h2v2h-2zM396 833h2v2h-2zM439 833h2v2h-2zM483 833h2v2h-2zM526 833h2v2h-2zM569 833h2v2h-2zM612 833h2v2h-2zM656 833h2v2h-2zM699 833h2v2h-2zM742 833h2v2h-2zM785 833h2v2h-2zM829 833h2v2h-2zM872 833h2v2h-2zM915 833h2v2h-2zM958 833h2v2h-2zM1002 833h2v2h-2zM1045 833h2v2h-2zM1088 833h2v2h-2zM1131 833h2v2h-2zM1175 833h2v2h-2zM1218 833h2v2h-2zM1261 833h2v2h-2zM1304 833h2v2h-2zM1347 833h2v2h-2zM1391 833h2v2h-2zM1434 833h2v2h-2zM1477 833h2v2h-2zM1520 833h2v2h-2zM1564 833h2v2h-2zM1607 833h2v2h-2zM1650 833h2v2h-2zM1693 833h2v2h-2zM1737 833h2v2h-2zM1780 833h2v2h-2zM1823 833h2v2h-2zM1866 833h2v2h-2zM1910 833h2v2h-2zM1953 833h2v2h-2zM1996 833h2v2h-2zM2039 833h2v2h-2zM2083 833h2v2h-2zM2126 833h2v2h-2zM2169 833h2v2h-2zM2212 833h2v2h-2zM2256 833h2v2h-2zM2299 833h2v2h-2zM2342 833h2v2h-2zM2385 833h2v2h-2zM2428 833h2v2h-2zM2472 833h2v2h-2zM2515 833h2v2h-2zM2558 833h2v2h-2zM2601 833h2v2h-2zM2645 833h2v2h-2zM2688 833h2v2h-2zM2731 833h2v2h-2zM2774 833h2v2h-2zM2818 833h2v2h-2zM2861 833h2v2h-2zM2904 833h2v2h-2zM2947 833h2v2h-2zM2991 833h2v2h-2zM180 876h2v2h-2zM223 876h2v2h-2zM266 876h2v2h-2zM310 876h2v2h-2zM353 876h2v2h-2zM396 876h2v2h-2zM439 876h2v2h-2zM483 876h2v2h-2zM526 876h2v2h-2zM569 876h2v2h-2zM612 876h2v2h-2zM656 876h2v2h-2zM699 876h2v2h-2zM742 876h2v2h-2zM785 876h2v2h-2zM829 876h2v2h-2zM872 876h2v2h-2zM915 876h2v2h-2zM958 876h2v2h-2zM1002 876h2v2h-2zM1045 876h2v2h-2zM1088 876h2v2h-2zM1131 876h2v2h-2zM1175 876h2v2h-2zM1218 876h2v2h-2zM1261 876h2v2h-2zM1304 876h2v2h-2zM1347 876h2v2h-2zM1391 876h2v2h-2zM1434 876h2v2h-2zM1477 876h2v2h-2zM1520 876h2v2h-2zM1564 876h2v2h-2zM1607 876h2v2h-2zM1650 876h2v2h-2zM1693 876h2v2h-2zM1737 876h2v2h-2zM1780 876h2v2h-2zM1823 876h2v2h-2zM1866 876h2v2h-2zM1910 876h2v2h-2zM1953 876h2v2h-2zM1996 876h2v2h-2zM2039 876h2v2h-2zM2083 876h2v2h-2zM2126 876h2v2h-2zM2169 876h2v2h-2zM2212 876h2v2h-2zM2256 876h2v2h-2zM2299 876h2v2h-2zM2342 876h2v2h-2zM2385 876h2v2h-2zM2428 876h2v2h-2zM2472 876h2v2h-2zM2515 876h2v2h-2zM2558 876h2v2h-2zM2601 876h2v2h-2zM2645 876h2v2h-2zM2688 876h2v2h-2zM2731 876h2v2h-2zM2774 876h2v2h-2zM2818 876h2v2h-2zM2861 876h2v2h-2zM2904 876h2v2h-2zM2947 876h2v2h-2zM2991 876h2v2h-2zM180 919h2v2h-2zM223 919h2v2h-2zM266 919h2v2h-2zM310 919h2v2h-2zM353 919h2v2h-2zM396 919h2v2h-2zM439 919h2v2h-2zM483 919h2v2h-2zM526 919h2v2h-2zM569 919h2v2h-2zM612 919h2v2h-2zM656 919h2v2h-2zM699 919h2v2h-2zM742 919h2v2h-2zM785 919h2v2h-2zM829 919h2v2h-2zM872 919h2v2h-2zM915 919h2v2h-2zM958 919h2v2h-2zM1002 919h2v2h-2zM1045 919h2v2h-2zM1088 919h2v2h-2zM1131 919h2v2h-2zM1175 919h2v2h-2zM1218 919h2v2h-2zM1261 919h2v2h-2zM1304 919h2v2h-2zM1347 919h2v2h-2zM1391 919h2v2h-2zM1434 919h2v2h-2zM1477 919h2v2h-2zM1520 919h2v2h-2zM1564 919h2v2h-2zM1607 919h2v2h-2zM1650 919h2v2h-2zM1693 919h2v2h-2zM1737 919h2v2h-2zM1780 919h2v2h-2zM1823 919h2v2h-2zM1866 919h2v2h-2zM1910 919h2v2h-2zM1953 919h2v2h-2zM1996 919h2v2h-2zM2039 919h2v2h-2zM2083 919h2v2h-2zM2126 919h2v2h-2zM2169 919h2v2h-2zM2212 919h2v2h-2zM2256 919h2v2h-2zM2299 919h2v2h-2zM2342 919h2v2h-2zM2385 919h2v2h-2zM2428 919h2v2h-2zM2472 919h2v2h-2zM2515 919h2v2h-2zM2558 919h2v2h-2zM2601 919h2v2h-2zM2645 919h2v2h-2zM2688 919h2v2h-2zM2731 919h2v2h-2zM2774 919h2v2h-2zM2818 919h2v2h-2zM2861 919h2v2h-2zM2904 919h2v2h-2zM2947 919h2v2h-2zM2991 919h2v2h-2zM180 963h2v2h-2zM223 963h2v2h-2zM266 963h2v2h-2zM310 963h2v2h-2zM353 963h2v2h-2zM396 963h2v2h-2zM439 963h2v2h-2zM483 963h2v2h-2zM526 963h2v2h-2zM569 963h2v2h-2zM612 963h2v2h-2zM656 963h2v2h-2zM699 963h2v2h-2zM742 963h2v2h-2zM785 963h2v2h-2zM829 963h2v2h-2zM872 963h2v2h-2zM915 963h2v2h-2zM958 963h2v2h-2zM1002 963h2v2h-2zM1045 963h2v2h-2zM1088 963h2v2h-2zM1131 963h2v2h-2zM1175 963h2v2h-2zM1218 963h2v2h-2zM1261 963h2v2h-2zM1304 963h2v2h-2zM1347 963h2v2h-2zM1391 963h2v2h-2zM1434 963h2v2h-2zM1477 963h2v2h-2zM1520 963h2v2h-2zM1564 963h2v2h-2zM1607 963h2v2h-2zM1650 963h2v2h-2zM1693 963h2v2h-2zM1737 963h2v2h-2zM1780 963h2v2h-2zM1823 963h2v2h-2zM1866 963h2v2h-2zM1910 963h2v2h-2zM1953 963h2v2h-2zM1996 963h2v2h-2zM2039 963h2v2h-2zM2083 963h2v2h-2zM2126 963h2v2h-2zM2169 963h2v2h-2zM2212 963h2v2h-2zM2256 963h2v2h-2zM2299 963h2v2h-2zM2342 963h2v2h-2zM2385 963h2v2h-2zM2428 963h2v2h-2zM2472 963h2v2h-2zM2515 963h2v2h-2zM2558 963h2v2h-2zM2601 963h2v2h-2zM2645 963h2v2h-2zM2688 963h2v2h-2zM2731 963h2v2h-2zM2774 963h2v2h-2zM2818 963h2v2h-2zM2861 963h2v2h-2zM2904 963h2v2h-2zM2947 963h2v2h-2zM2991 963h2v2h-2zM180 1006h2v2h-2zM223 1006h2v2h-2zM266 1006h2v2h-2zM310 1006h2v2h-2zM353 1006h2v2h-2zM396 1006h2v2h-2zM439 1006h2v2h-2zM483 1006h2v2h-2zM526 1006h2v2h-2zM569 1006h2v2h-2zM612 1006h2v2h-2zM656 1006h2v2h-2zM699 1006h2v2h-2zM742 1006h2v2h-2zM785 1006h2v2h-2zM829 1006h2v2h-2zM872 1006h2v2h-2zM915 1006h2v2h-2zM958 1006h2v2h-2zM1002 1006h2v2h-2zM1045 1006h2v2h-2zM1088 1006h2v2h-2zM1131 1006h2v2h-2zM1175 1006h2v2h-2zM1218 1006h2v2h-2zM1261 1006h2v2h-2zM1304 1006h2v2h-2zM1347 1006h2v2h-2zM1391 1006h2v2h-2zM1434 1006h2v2h-2zM1477 1006h2v2h-2zM1520 1006h2v2h-2zM1564 1006h2v2h-2zM1607 1006h2v2h-2zM1650 1006h2v2h-2zM1693 1006h2v2h-2zM1737 1006h2v2h-2zM1780 1006h2v2h-2zM1823 1006h2v2h-2zM1866 1006h2v2h-2zM1910 1006h2v2h-2zM1953 1006h2v2h-2zM1996 1006h2v2h-2zM2039 1006h2v2h-2zM2083 1006h2v2h-2zM2126 1006h2v2h-2zM2169 1006h2v2h-2zM2212 1006h2v2h-2zM2256 1006h2v2h-2zM2299 1006h2v2h-2zM2342 1006h2v2h-2zM2385 1006h2v2h-2zM2428 1006h2v2h-2zM2472 1006h2v2h-2zM2515 1006h2v2h-2zM2558 1006h2v2h-2zM2601 1006h2v2h-2zM2645 1006h2v2h-2zM2688 1006h2v2h-2zM2731 1006h2v2h-2zM2774 1006h2v2h-2zM2818 1006h2v2h-2zM2861 1006h2v2h-2zM2904 1006h2v2h-2zM2947 1006h2v2h-2zM2991 1006h2v2h-2zM180 1049h2v2h-2zM223 1049h2v2h-2zM266 1049h2v2h-2zM310 1049h2v2h-2zM353 1049h2v2h-2zM396 1049h2v2h-2zM439 1049h2v2h-2zM483 1049h2v2h-2zM526 1049h2v2h-2zM569 1049h2v2h-2zM612 1049h2v2h-2zM656 1049h2v2h-2zM699 1049h2v2h-2zM742 1049h2v2h-2zM785 1049h2v2h-2zM829 1049h2v2h-2zM872 1049h2v2h-2zM915 1049h2v2h-2zM958 1049h2v2h-2zM1002 1049h2v2h-2zM1045 1049h2v2h-2zM1088 1049h2v2h-2zM1131 1049h2v2h-2zM1175 1049h2v2h-2zM1218 1049h2v2h-2zM1261 1049h2v2h-2zM1304 1049h2v2h-2zM1347 1049h2v2h-2zM1391 1049h2v2h-2zM1434 1049h2v2h-2zM1477 1049h2v2h-2zM1520 1049h2v2h-2zM1564 1049h2v2h-2zM1607 1049h2v2h-2zM1650 1049h2v2h-2zM1693 1049h2v2h-2zM1737 1049h2v2h-2zM1780 1049h2v2h-2zM1823 1049h2v2h-2zM1866 1049h2v2h-2zM1910 1049h2v2h-2zM1953 1049h2v2h-2zM1996 1049h2v2h-2zM2039 1049h2v2h-2zM2083 1049h2v2h-2zM2126 1049h2v2h-2zM2169 1049h2v2h-2zM2212 1049h2v2h-2zM2256 1049h2v2h-2zM2299 1049h2v2h-2zM2342 1049h2v2h-2zM2385 1049h2v2h-2zM2428 1049h2v2h-2zM2472 1049h2v2h-2zM2515 1049h2v2h-2zM2558 1049h2v2h-2zM2601 1049h2v2h-2zM2645 1049h2v2h-2zM2688 1049h2v2h-2zM2731 1049h2v2h-2zM2774 1049h2v2h-2zM2818 1049h2v2h-2zM2861 1049h2v2h-2zM2904 1049h2v2h-2zM2947 1049h2v2h-2zM2991 1049h2v2h-2zM180 1092h2v2h-2zM223 1092h2v2h-2zM266 1092h2v2h-2zM310 1092h2v2h-2zM353 1092h2v2h-2zM396 1092h2v2h-2zM439 1092h2v2h-2zM483 1092h2v2h-2zM526 1092h2v2h-2zM569 1092h2v2h-2zM612 1092h2v2h-2zM656 1092h2v2h-2zM699 1092h2v2h-2zM742 1092h2v2h-2zM785 1092h2v2h-2zM829 1092h2v2h-2zM872 1092h2v2h-2zM915 1092h2v2h-2zM958 1092h2v2h-2zM1002 1092h2v2h-2zM1045 1092h2v2h-2zM1088 1092h2v2h-2zM1131 1092h2v2h-2zM1175 1092h2v2h-2zM1218 1092h2v2h-2zM1261 1092h2v2h-2zM1304 1092h2v2h-2zM1347 1092h2v2h-2zM1391 1092h2v2h-2zM1434 1092h2v2h-2zM1477 1092h2v2h-2zM1520 1092h2v2h-2zM1564 1092h2v2h-2zM1607 1092h2v2h-2zM1650 1092h2v2h-2zM1693 1092h2v2h-2zM1737 1092h2v2h-2zM1780 1092h2v2h-2zM1823 1092h2v2h-2zM1866 1092h2v2h-2zM1910 1092h2v2h-2zM1953 1092h2v2h-2zM1996 1092h2v2h-2zM2039 1092h2v2h-2zM2083 1092h2v2h-2zM2126 1092h2v2h-2zM2169 1092h2v2h-2zM2212 1092h2v2h-2zM2256 1092h2v2h-2zM2299 1092h2v2h-2zM2342 1092h2v2h-2zM2385 1092h2v2h-2zM2428 1092h2v2h-2zM2472 1092h2v2h-2zM2515 1092h2v2h-2zM2558 1092h2v2h-2zM2601 1092h2v2h-2zM2645 1092h2v2h-2zM2688 1092h2v2h-2zM2731 1092h2v2h-2zM2774 1092h2v2h-2zM2818 1092h2v2h-2zM2861 1092h2v2h-2zM2904 1092h2v2h-2zM2947 1092h2v2h-2zM2991 1092h2v2h-2zM180 1136h2v2h-2zM223 1136h2v2h-2zM266 1136h2v2h-2zM310 1136h2v2h-2zM353 1136h2v2h-2zM396 1136h2v2h-2zM439 1136h2v2h-2zM483 1136h2v2h-2zM526 1136h2v2h-2zM569 1136h2v2h-2zM612 1136h2v2h-2zM656 1136h2v2h-2zM699 1136h2v2h-2zM742 1136h2v2h-2zM785 1136h2v2h-2zM829 1136h2v2h-2zM872 1136h2v2h-2zM915 1136h2v2h-2zM958 1136h2v2h-2zM1002 1136h2v2h-2zM1045 1136h2v2h-2zM1088 1136h2v2h-2zM1131 1136h2v2h-2zM1175 1136h2v2h-2zM1218 1136h2v2h-2zM1261 1136h2v2h-2zM1304 1136h2v2h-2zM1347 1136h2v2h-2zM1391 1136h2v2h-2zM1434 1136h2v2h-2zM1477 1136h2v2h-2zM1520 1136h2v2h-2zM1564 1136h2v2h-2zM1607 1136h2v2h-2zM1650 1136h2v2h-2zM1693 1136h2v2h-2zM1737 1136h2v2h-2zM1780 1136h2v2h-2zM1823 1136h2v2h-2zM1866 1136h2v2h-2zM1910 1136h2v2h-2zM1953 1136h2v2h-2zM1996 1136h2v2h-2zM2039 1136h2v2h-2zM2083 1136h2v2h-2zM2126 1136h2v2h-2zM2169 1136h2v2h-2zM2212 1136h2v2h-2zM2256 1136h2v2h-2zM2299 1136h2v2h-2zM2342 1136h2v2h-2zM2385 1136h2v2h-2zM2428 1136h2v2h-2zM2472 1136h2v2h-2zM2515 1136h2v2h-2zM2558 1136h2v2h-2zM2601 1136h2v2h-2zM2645 1136h2v2h-2zM2688 1136h2v2h-2zM2731 1136h2v2h-2zM2774 1136h2v2h-2zM2818 1136h2v2h-2zM2861 1136h2v2h-2zM2904 1136h2v2h-2zM2947 1136h2v2h-2zM2991 1136h2v2h-2zM180 1179h2v2h-2zM223 1179h2v2h-2zM266 1179h2v2h-2zM310 1179h2v2h-2zM353 1179h2v2h-2zM396 1179h2v2h-2zM439 1179h2v2h-2zM483 1179h2v2h-2zM526 1179h2v2h-2zM569 1179h2v2h-2zM612 1179h2v2h-2zM656 1179h2v2h-2zM699 1179h2v2h-2zM742 1179h2v2h-2zM785 1179h2v2h-2zM829 1179h2v2h-2zM872 1179h2v2h-2zM915 1179h2v2h-2zM958 1179h2v2h-2zM1002 1179h2v2h-2zM1045 1179h2v2h-2zM1088 1179h2v2h-2zM1131 1179h2v2h-2zM1175 1179h2v2h-2zM1218 1179h2v2h-2zM1261 1179h2v2h-2zM1304 1179h2v2h-2zM1347 1179h2v2h-2zM1391 1179h2v2h-2zM1434 1179h2v2h-2zM1477 1179h2v2h-2zM1520 1179h2v2h-2zM1564 1179h2v2h-2zM1607 1179h2v2h-2zM1650 1179h2v2h-2zM1693 1179h2v2h-2zM1737 1179h2v2h-2zM1780 1179h2v2h-2zM1823 1179h2v2h-2zM1866 1179h2v2h-2zM1910 1179h2v2h-2zM1953 1179h2v2h-2zM1996 1179h2v2h-2zM2039 1179h2v2h-2zM2083 1179h2v2h-2zM2126 1179h2v2h-2zM2169 1179h2v2h-2zM2212 1179h2v2h-2zM2256 1179h2v2h-2zM2299 1179h2v2h-2zM2342 1179h2v2h-2zM2385 1179h2v2h-2zM2428 1179h2v2h-2zM2472 1179h2v2h-2zM2515 1179h2v2h-2zM2558 1179h2v2h-2zM2601 1179h2v2h-2zM2645 1179h2v2h-2zM2688 1179h2v2h-2zM2731 1179h2v2h-2zM2774 1179h2v2h-2zM2818 1179h2v2h-2zM2861 1179h2v2h-2zM2904 1179h2v2h-2zM2947 1179h2v2h-2zM2991 1179h2v2h-2zM180 1222h2v2h-2zM223 1222h2v2h-2zM266 1222h2v2h-2zM310 1222h2v2h-2zM353 1222h2v2h-2zM396 1222h2v2h-2zM439 1222h2v2h-2zM483 1222h2v2h-2zM526 1222h2v2h-2zM569 1222h2v2h-2zM612 1222h2v2h-2zM656 1222h2v2h-2zM699 1222h2v2h-2zM742 1222h2v2h-2zM785 1222h2v2h-2zM829 1222h2v2h-2zM872 1222h2v2h-2zM915 1222h2v2h-2zM958 1222h2v2h-2zM1002 1222h2v2h-2zM1045 1222h2v2h-2zM1088 1222h2v2h-2zM1131 1222h2v2h-2zM1175 1222h2v2h-2zM1218 1222h2v2h-2zM1261 1222h2v2h-2zM1304 1222h2v2h-2zM1347 1222h2v2h-2zM1391 1222h2v2h-2zM1434 1222h2v2h-2zM1477 1222h2v2h-2zM1520 1222h2v2h-2zM1564 1222h2v2h-2zM1607 1222h2v2h-2zM1650 1222h2v2h-2zM1693 1222h2v2h-2zM1737 1222h2v2h-2zM1780 1222h2v2h-2zM1823 1222h2v2h-2zM1866 1222h2v2h-2zM1910 1222h2v2h-2zM1953 1222h2v2h-2zM1996 1222h2v2h-2zM2039 1222h2v2h-2zM2083 1222h2v2h-2zM2126 1222h2v2h-2zM2169 1222h2v2h-2zM2212 1222h2v2h-2zM2256 1222h2v2h-2zM2299 1222h2v2h-2zM2342 1222h2v2h-2zM2385 1222h2v2h-2zM2428 1222h2v2h-2zM2472 1222h2v2h-2zM2515 1222h2v2h-2zM2558 1222h2v2h-2zM2601 1222h2v2h-2zM2645 1222h2v2h-2zM2688 1222h2v2h-2zM2731 1222h2v2h-2zM2774 1222h2v2h-2zM2818 1222h2v2h-2zM2861 1222h2v2h-2zM2904 1222h2v2h-2zM2947 1222h2v2h-2zM2991 1222h2v2h-2zM180 1265h2v2h-2zM223 1265h2v2h-2zM266 1265h2v2h-2zM310 1265h2v2h-2zM353 1265h2v2h-2zM396 1265h2v2h-2zM439 1265h2v2h-2zM483 1265h2v2h-2zM526 1265h2v2h-2zM569 1265h2v2h-2zM612 1265h2v2h-2zM656 1265h2v2h-2zM699 1265h2v2h-2zM742 1265h2v2h-2zM785 1265h2v2h-2zM829 1265h2v2h-2zM872 1265h2v2h-2zM915 1265h2v2h-2zM958 1265h2v2h-2zM1002 1265h2v2h-2zM1045 1265h2v2h-2zM1088 1265h2v2h-2zM1131 1265h2v2h-2zM1175 1265h2v2h-2zM1218 1265h2v2h-2zM1261 1265h2v2h-2zM1304 1265h2v2h-2zM1347 1265h2v2h-2zM1391 1265h2v2h-2zM1434 1265h2v2h-2zM1477 1265h2v2h-2zM1520 1265h2v2h-2zM1564 1265h2v2h-2zM1607 1265h2v2h-2zM1650 1265h2v2h-2zM1693 1265h2v2h-2zM1737 1265h2v2h-2zM1780 1265h2v2h-2zM1823 1265h2v2h-2zM1866 1265h2v2h-2zM1910 1265h2v2h-2zM1953 1265h2v2h-2zM1996 1265h2v2h-2zM2039 1265h2v2h-2zM2083 1265h2v2h-2zM2126 1265h2v2h-2zM2169 1265h2v2h-2zM2212 1265h2v2h-2zM2256 1265h2v2h-2zM2299 1265h2v2h-2zM2342 1265h2v2h-2zM2385 1265h2v2h-2zM2428 1265h2v2h-2zM2472 1265h2v2h-2zM2515 1265h2v2h-2zM2558 1265h2v2h-2zM2601 1265h2v2h-2zM2645 1265h2v2h-2zM2688 1265h2v2h-2zM2731 1265h2v2h-2zM2774 1265h2v2h-2zM2818 1265h2v2h-2zM2861 1265h2v2h-2zM2904 1265h2v2h-2zM2947 1265h2v2h-2zM2991 1265h2v2h-2zM180 1308h2v2h-2zM223 1308h2v2h-2zM266 1308h2v2h-2zM310 1308h2v2h-2zM353 1308h2v2h-2zM396 1308h2v2h-2zM439 1308h2v2h-2zM483 1308h2v2h-2zM526 1308h2v2h-2zM569 1308h2v2h-2zM612 1308h2v2h-2zM656 1308h2v2h-2zM699 1308h2v2h-2zM742 1308h2v2h-2zM785 1308h2v2h-2zM829 1308h2v2h-2zM872 1308h2v2h-2zM915 1308h2v2h-2zM958 1308h2v2h-2zM1002 1308h2v2h-2zM1045 1308h2v2h-2zM1088 1308h2v2h-2zM1131 1308h2v2h-2zM1175 1308h2v2h-2zM1218 1308h2v2h-2zM1261 1308h2v2h-2zM1304 1308h2v2h-2zM1347 1308h2v2h-2zM1391 1308h2v2h-2zM1434 1308h2v2h-2zM1477 1308h2v2h-2zM1520 1308h2v2h-2zM1564 1308h2v2h-2zM1607 1308h2v2h-2zM1650 1308h2v2h-2zM1693 1308h2v2h-2zM1737 1308h2v2h-2zM1780 1308h2v2h-2zM1823 1308h2v2h-2zM1866 1308h2v2h-2zM1910 1308h2v2h-2zM1953 1308h2v2h-2zM1996 1308h2v2h-2zM2039 1308h2v2h-2zM2083 1308h2v2h-2zM2126 1308h2v2h-2zM2169 1308h2v2h-2zM2212 1308h2v2h-2zM2256 1308h2v2h-2zM2299 1308h2v2h-2zM2342 1308h2v2h-2zM2385 1308h2v2h-2zM2428 1308h2v2h-2zM2472 1308h2v2h-2zM2515 1308h2v2h-2zM2558 1308h2v2h-2zM2601 1308h2v2h-2zM2645 1308h2v2h-2zM2688 1308h2v2h-2zM2731 1308h2v2h-2zM2774 1308h2v2h-2zM2818 1308h2v2h-2zM2861 1308h2v2h-2zM2904 1308h2v2h-2zM2947 1308h2v2h-2zM2991 1308h2v2h-2zM180 1352h2v2h-2zM223 1352h2v2h-2zM266 1352h2v2h-2zM310 1352h2v2h-2zM353 1352h2v2h-2zM396 1352h2v2h-2zM439 1352h2v2h-2zM483 1352h2v2h-2zM526 1352h2v2h-2zM569 1352h2v2h-2zM612 1352h2v2h-2zM656 1352h2v2h-2zM699 1352h2v2h-2zM742 1352h2v2h-2zM785 1352h2v2h-2zM829 1352h2v2h-2zM872 1352h2v2h-2zM915 1352h2v2h-2zM958 1352h2v2h-2zM1002 1352h2v2h-2zM1045 1352h2v2h-2zM1088 1352h2v2h-2zM1131 1352h2v2h-2zM1175 1352h2v2h-2zM1218 1352h2v2h-2zM1261 1352h2v2h-2zM1304 1352h2v2h-2zM1347 1352h2v2h-2zM1391 1352h2v2h-2zM1434 1352h2v2h-2zM1477 1352h2v2h-2zM1520 1352h2v2h-2zM1564 1352h2v2h-2zM1607 1352h2v2h-2zM1650 1352h2v2h-2zM1693 1352h2v2h-2zM1737 1352h2v2h-2zM1780 1352h2v2h-2zM1823 1352h2v2h-2zM1866 1352h2v2h-2zM1910 1352h2v2h-2zM1953 1352h2v2h-2zM1996 1352h2v2h-2zM2039 1352h2v2h-2zM2083 1352h2v2h-2zM2126 1352h2v2h-2zM2169 1352h2v2h-2zM2212 1352h2v2h-2zM2256 1352h2v2h-2zM2299 1352h2v2h-2zM2342 1352h2v2h-2zM2385 1352h2v2h-2zM2428 1352h2v2h-2zM2472 1352h2v2h-2zM2515 1352h2v2h-2zM2558 1352h2v2h-2zM2601 1352h2v2h-2zM2645 1352h2v2h-2zM2688 1352h2v2h-2zM2731 1352h2v2h-2zM2774 1352h2v2h-2zM2818 1352h2v2h-2zM2861 1352h2v2h-2zM2904 1352h2v2h-2zM2947 1352h2v2h-2zM2991 1352h2v2h-2zM180 1395h2v2h-2zM223 1395h2v2h-2zM266 1395h2v2h-2zM310 1395h2v2h-2zM353 1395h2v2h-2zM396 1395h2v2h-2zM439 1395h2v2h-2zM483 1395h2v2h-2zM526 1395h2v2h-2zM569 1395h2v2h-2zM612 1395h2v2h-2zM656 1395h2v2h-2zM699 1395h2v2h-2zM742 1395h2v2h-2zM785 1395h2v2h-2zM829 1395h2v2h-2zM872 1395h2v2h-2zM915 1395h2v2h-2zM958 1395h2v2h-2zM1002 1395h2v2h-2zM1045 1395h2v2h-2zM1088 1395h2v2h-2zM1131 1395h2v2h-2zM1175 1395h2v2h-2zM1218 1395h2v2h-2zM1261 1395h2v2h-2zM1304 1395h2v2h-2zM1347 1395h2v2h-2zM1391 1395h2v2h-2zM1434 1395h2v2h-2zM1477 1395h2v2h-2zM1520 1395h2v2h-2zM1564 1395h2v2h-2zM1607 1395h2v2h-2zM1650 1395h2v2h-2zM1693 1395h2v2h-2zM1737 1395h2v2h-2zM1780 1395h2v2h-2zM1823 1395h2v2h-2zM1866 1395h2v2h-2zM1910 1395h2v2h-2zM1953 1395h2v2h-2zM1996 1395h2v2h-2zM2039 1395h2v2h-2zM2083 1395h2v2h-2zM2126 1395h2v2h-2zM2169 1395h2v2h-2zM2212 1395h2v2h-2zM2256 1395h2v2h-2zM2299 1395h2v2h-2zM2342 1395h2v2h-2zM2385 1395h2v2h-2zM2428 1395h2v2h-2zM2472 1395h2v2h-2zM2515 1395h2v2h-2zM2558 1395h2v2h-2zM2601 1395h2v2h-2zM2645 1395h2v2h-2zM2688 1395h2v2h-2zM2731 1395h2v2h-2zM2774 1395h2v2h-2zM2818 1395h2v2h-2zM2861 1395h2v2h-2zM2904 1395h2v2h-2zM2947 1395h2v2h-2zM2991 1395h2v2h-2zM180 1438h2v2h-2zM223 1438h2v2h-2zM266 1438h2v2h-2zM310 1438h2v2h-2zM353 1438h2v2h-2zM396 1438h2v2h-2zM439 1438h2v2h-2zM483 1438h2v2h-2zM526 1438h2v2h-2zM569 1438h2v2h-2zM612 1438h2v2h-2zM656 1438h2v2h-2zM699 1438h2v2h-2zM742 1438h2v2h-2zM785 1438h2v2h-2zM829 1438h2v2h-2zM872 1438h2v2h-2zM915 1438h2v2h-2zM958 1438h2v2h-2zM1002 1438h2v2h-2zM1045 1438h2v2h-2zM1088 1438h2v2h-2zM1131 1438h2v2h-2zM1175 1438h2v2h-2zM1218 1438h2v2h-2zM1261 1438h2v2h-2zM1304 1438h2v2h-2zM1347 1438h2v2h-2zM1391 1438h2v2h-2zM1434 1438h2v2h-2zM1477 1438h2v2h-2zM1520 1438h2v2h-2zM1564 1438h2v2h-2zM1607 1438h2v2h-2zM1650 1438h2v2h-2zM1693 1438h2v2h-2zM1737 1438h2v2h-2zM1780 1438h2v2h-2zM1823 1438h2v2h-2zM1866 1438h2v2h-2zM1910 1438h2v2h-2zM1953 1438h2v2h-2zM1996 1438h2v2h-2zM2039 1438h2v2h-2zM2083 1438h2v2h-2zM2126 1438h2v2h-2zM2169 1438h2v2h-2zM2212 1438h2v2h-2zM2256 1438h2v2h-2zM2299 1438h2v2h-2zM2342 1438h2v2h-2zM2385 1438h2v2h-2zM2428 1438h2v2h-2zM2472 1438h2v2h-2zM2515 1438h2v2h-2zM2558 1438h2v2h-2zM2601 1438h2v2h-2zM2645 1438h2v2h-2zM2688 1438h2v2h-2zM2731 1438h2v2h-2zM2774 1438h2v2h-2zM2818 1438h2v2h-2zM2861 1438h2v2h-2zM2904 1438h2v2h-2zM2947 1438h2v2h-2zM2991 1438h2v2h-2zM180 1481h2v2h-2zM223 1481h2v2h-2zM266 1481h2v2h-2zM310 1481h2v2h-2zM353 1481h2v2h-2zM396 1481h2v2h-2zM439 1481h2v2h-2zM483 1481h2v2h-2zM526 1481h2v2h-2zM569 1481h2v2h-2zM612 1481h2v2h-2zM656 1481h2v2h-2zM699 1481h2v2h-2zM742 1481h2v2h-2zM785 1481h2v2h-2zM829 1481h2v2h-2zM872 1481h2v2h-2zM915 1481h2v2h-2zM958 1481h2v2h-2zM1002 1481h2v2h-2zM1045 1481h2v2h-2zM1088 1481h2v2h-2zM1131 1481h2v2h-2zM1175 1481h2v2h-2zM1218 1481h2v2h-2zM1261 1481h2v2h-2zM1304 1481h2v2h-2zM1347 1481h2v2h-2zM1391 1481h2v2h-2zM1434 1481h2v2h-2zM1477 1481h2v2h-2zM1520 1481h2v2h-2zM1564 1481h2v2h-2zM1607 1481h2v2h-2zM1650 1481h2v2h-2zM1693 1481h2v2h-2zM1737 1481h2v2h-2zM1780 1481h2v2h-2zM1823 1481h2v2h-2zM1866 1481h2v2h-2zM1910 1481h2v2h-2zM1953 1481h2v2h-2zM1996 1481h2v2h-2zM2039 1481h2v2h-2zM2083 1481h2v2h-2zM2126 1481h2v2h-2zM2169 1481h2v2h-2zM2212 1481h2v2h-2zM2256 1481h2v2h-2zM2299 1481h2v2h-2zM2342 1481h2v2h-2zM2385 1481h2v2h-2zM2428 1481h2v2h-2zM2472 1481h2v2h-2zM2515 1481h2v2h-2zM2558 1481h2v2h-2zM2601 1481h2v2h-2zM2645 1481h2v2h-2zM2688 1481h2v2h-2zM2731 1481h2v2h-2zM2774 1481h2v2h-2zM2818 1481h2v2h-2zM2861 1481h2v2h-2zM2904 1481h2v2h-2zM2947 1481h2v2h-2zM2991 1481h2v2h-2zM180 1525h2v2h-2zM223 1525h2v2h-2zM266 1525h2v2h-2zM310 1525h2v2h-2zM353 1525h2v2h-2zM396 1525h2v2h-2zM439 1525h2v2h-2zM483 1525h2v2h-2zM526 1525h2v2h-2zM569 1525h2v2h-2zM612 1525h2v2h-2zM656 1525h2v2h-2zM699 1525h2v2h-2zM742 1525h2v2h-2zM785 1525h2v2h-2zM829 1525h2v2h-2zM872 1525h2v2h-2zM915 1525h2v2h-2zM958 1525h2v2h-2zM1002 1525h2v2h-2zM1045 1525h2v2h-2zM1088 1525h2v2h-2zM1131 1525h2v2h-2zM1175 1525h2v2h-2zM1218 1525h2v2h-2zM1261 1525h2v2h-2zM1304 1525h2v2h-2zM1347 1525h2v2h-2zM1391 1525h2v2h-2zM1434 1525h2v2h-2zM1477 1525h2v2h-2zM1520 1525h2v2h-2zM1564 1525h2v2h-2zM1607 1525h2v2h-2zM1650 1525h2v2h-2zM1693 1525h2v2h-2zM1737 1525h2v2h-2zM1780 1525h2v2h-2zM1823 1525h2v2h-2zM1866 1525h2v2h-2zM1910 1525h2v2h-2zM1953 1525h2v2h-2zM1996 1525h2v2h-2zM2039 1525h2v2h-2zM2083 1525h2v2h-2zM2126 1525h2v2h-2zM2169 1525h2v2h-2zM2212 1525h2v2h-2zM2256 1525h2v2h-2zM2299 1525h2v2h-2zM2342 1525h2v2h-2zM2385 1525h2v2h-2zM2428 1525h2v2h-2zM2472 1525h2v2h-2zM2515 1525h2v2h-2zM2558 1525h2v2h-2zM2601 1525h2v2h-2zM2645 1525h2v2h-2zM2688 1525h2v2h-2zM2731 1525h2v2h-2zM2774 1525h2v2h-2zM2818 1525h2v2h-2zM2861 1525h2v2h-2zM2904 1525h2v2h-2zM2947 1525h2v2h-2zM2991 1525h2v2h-2zM180 1568h2v2h-2zM223 1568h2v2h-2zM266 1568h2v2h-2zM310 1568h2v2h-2zM353 1568h2v2h-2zM396 1568h2v2h-2zM439 1568h2v2h-2zM483 1568h2v2h-2zM526 1568h2v2h-2zM569 1568h2v2h-2zM612 1568h2v2h-2zM656 1568h2v2h-2zM699 1568h2v2h-2zM742 1568h2v2h-2zM785 1568h2v2h-2zM829 1568h2v2h-2zM872 1568h2v2h-2zM915 1568h2v2h-2zM958 1568h2v2h-2zM1002 1568h2v2h-2zM1045 1568h2v2h-2zM1088 1568h2v2h-2zM1131 1568h2v2h-2zM1175 1568h2v2h-2zM1218 1568h2v2h-2zM1261 1568h2v2h-2zM1304 1568h2v2h-2zM1347 1568h2v2h-2zM1391 1568h2v2h-2zM1434 1568h2v2h-2zM1477 1568h2v2h-2zM1520 1568h2v2h-2zM1564 1568h2v2h-2zM1607 1568h2v2h-2zM1650 1568h2v2h-2zM1693 1568h2v2h-2zM1737 1568h2v2h-2zM1780 1568h2v2h-2zM1823 1568h2v2h-2zM1866 1568h2v2h-2zM1910 1568h2v2h-2zM1953 1568h2v2h-2zM1996 1568h2v2h-2zM2039 1568h2v2h-2zM2083 1568h2v2h-2zM2126 1568h2v2h-2zM2169 1568h2v2h-2zM2212 1568h2v2h-2zM2256 1568h2v2h-2zM2299 1568h2v2h-2zM2342 1568h2v2h-2zM2385 1568h2v2h-2zM2428 1568h2v2h-2zM2472 1568h2v2h-2zM2515 1568h2v2h-2zM2558 1568h2v2h-2zM2601 1568h2v2h-2zM2645 1568h2v2h-2zM2688 1568h2v2h-2zM2731 1568h2v2h-2zM2774 1568h2v2h-2zM2818 1568h2v2h-2zM2861 1568h2v2h-2zM2904 1568h2v2h-2zM2947 1568h2v2h-2zM2991 1568h2v2h-2zM180 1611h2v2h-2zM223 1611h2v2h-2zM266 1611h2v2h-2zM310 1611h2v2h-2zM353 1611h2v2h-2zM396 1611h2v2h-2zM439 1611h2v2h-2zM483 1611h2v2h-2zM526 1611h2v2h-2zM569 1611h2v2h-2zM612 1611h2v2h-2zM656 1611h2v2h-2zM699 1611h2v2h-2zM742 1611h2v2h-2zM785 1611h2v2h-2zM829 1611h2v2h-2zM872 1611h2v2h-2zM915 1611h2v2h-2zM958 1611h2v2h-2zM1002 1611h2v2h-2zM1045 1611h2v2h-2zM1088 1611h2v2h-2zM1131 1611h2v2h-2zM1175 1611h2v2h-2zM1218 1611h2v2h-2zM1261 1611h2v2h-2zM1304 1611h2v2h-2zM1347 1611h2v2h-2zM1391 1611h2v2h-2zM1434 1611h2v2h-2zM1477 1611h2v2h-2zM1520 1611h2v2h-2zM1564 1611h2v2h-2zM1607 1611h2v2h-2zM1650 1611h2v2h-2zM1693 1611h2v2h-2zM1737 1611h2v2h-2zM1780 1611h2v2h-2zM1823 1611h2v2h-2zM1866 1611h2v2h-2zM1910 1611h2v2h-2zM1953 1611h2v2h-2zM1996 1611h2v2h-2zM2039 1611h2v2h-2zM2083 1611h2v2h-2zM2126 1611h2v2h-2zM2169 1611h2v2h-2zM2212 1611h2v2h-2zM2256 1611h2v2h-2zM2299 1611h2v2h-2zM2342 1611h2v2h-2zM2385 1611h2v2h-2zM2428 1611h2v2h-2zM2472 1611h2v2h-2zM2515 1611h2v2h-2zM2558 1611h2v2h-2zM2601 1611h2v2h-2zM2645 1611h2v2h-2zM2688 1611h2v2h-2zM2731 1611h2v2h-2zM2774 1611h2v2h-2zM2818 1611h2v2h-2zM2861 1611h2v2h-2zM2904 1611h2v2h-2zM2947 1611h2v2h-2zM2991 1611h2v2h-2zM180 1654h2v2h-2zM223 1654h2v2h-2zM266 1654h2v2h-2zM310 1654h2v2h-2zM353 1654h2v2h-2zM396 1654h2v2h-2zM439 1654h2v2h-2zM483 1654h2v2h-2zM526 1654h2v2h-2zM569 1654h2v2h-2zM612 1654h2v2h-2zM656 1654h2v2h-2zM699 1654h2v2h-2zM742 1654h2v2h-2zM785 1654h2v2h-2zM829 1654h2v2h-2zM872 1654h2v2h-2zM915 1654h2v2h-2zM958 1654h2v2h-2zM1002 1654h2v2h-2zM1045 1654h2v2h-2zM1088 1654h2v2h-2zM1131 1654h2v2h-2zM1175 1654h2v2h-2zM1218 1654h2v2h-2zM1261 1654h2v2h-2zM1304 1654h2v2h-2zM1347 1654h2v2h-2zM1391 1654h2v2h-2zM1434 1654h2v2h-2zM1477 1654h2v2h-2zM1520 1654h2v2h-2zM1564 1654h2v2h-2zM1607 1654h2v2h-2zM1650 1654h2v2h-2zM1693 1654h2v2h-2zM1737 1654h2v2h-2zM1780 1654h2v2h-2zM1823 1654h2v2h-2zM1866 1654h2v2h-2zM1910 1654h2v2h-2zM1953 1654h2v2h-2zM1996 1654h2v2h-2zM2039 1654h2v2h-2zM2083 1654h2v2h-2zM2126 1654h2v2h-2zM2169 1654h2v2h-2zM2212 1654h2v2h-2zM2256 1654h2v2h-2zM2299 1654h2v2h-2zM2342 1654h2v2h-2zM2385 1654h2v2h-2zM2428 1654h2v2h-2zM2472 1654h2v2h-2zM2515 1654h2v2h-2zM2558 1654h2v2h-2zM2601 1654h2v2h-2zM2645 1654h2v2h-2zM2688 1654h2v2h-2zM2731 1654h2v2h-2zM2774 1654h2v2h-2zM2818 1654h2v2h-2zM2861 1654h2v2h-2zM2904 1654h2v2h-2zM2947 1654h2v2h-2zM2991 1654h2v2h-2zM180 1698h2v2h-2zM223 1698h2v2h-2zM266 1698h2v2h-2zM310 1698h2v2h-2zM353 1698h2v2h-2zM396 1698h2v2h-2zM439 1698h2v2h-2zM483 1698h2v2h-2zM526 1698h2v2h-2zM569 1698h2v2h-2zM612 1698h2v2h-2zM656 1698h2v2h-2zM699 1698h2v2h-2zM742 1698h2v2h-2zM785 1698h2v2h-2zM829 1698h2v2h-2zM872 1698h2v2h-2zM915 1698h2v2h-2zM958 1698h2v2h-2zM1002 1698h2v2h-2zM1045 1698h2v2h-2zM1088 1698h2v2h-2zM1131 1698h2v2h-2zM1175 1698h2v2h-2zM1218 1698h2v2h-2zM1261 1698h2v2h-2zM1304 1698h2v2h-2zM1347 1698h2v2h-2zM1391 1698h2v2h-2zM1434 1698h2v2h-2zM1477 1698h2v2h-2zM1520 1698h2v2h-2zM1564 1698h2v2h-2zM1607 1698h2v2h-2zM1650 1698h2v2h-2zM1693 1698h2v2h-2zM1737 1698h2v2h-2zM1780 1698h2v2h-2zM1823 1698h2v2h-2zM1866 1698h2v2h-2zM1910 1698h2v2h-2zM1953 1698h2v2h-2zM1996 1698h2v2h-2zM2039 1698h2v2h-2zM2083 1698h2v2h-2zM2126 1698h2v2h-2zM2169 1698h2v2h-2zM2212 1698h2v2h-2zM2256 1698h2v2h-2zM2299 1698h2v2h-2zM2342 1698h2v2h-2zM2385 1698h2v2h-2zM2428 1698h2v2h-2zM2472 1698h2v2h-2zM2515 1698h2v2h-2zM2558 1698h2v2h-2zM2601 1698h2v2h-2zM2645 1698h2v2h-2zM2688 1698h2v2h-2zM2731 1698h2v2h-2zM2774 1698h2v2h-2zM2818 1698h2v2h-2zM2861 1698h2v2h-2zM2904 1698h2v2h-2zM2947 1698h2v2h-2zM2991 1698h2v2h-2z" fill="#767676" shape-rendering="crispEdges"/></svg>


<!-- edges -->
<svg style="left:0;top:0" width="3024" height="1714">
<g fill="none" stroke="#4a4a4a" stroke-width="2.2">
<path d="M475,867 H571 Q576,867 576,866 Q576,865 581,865 H666"/>
<path d="M1231,850 H1328 Q1333,850 1333,845 V844 Q1333,839 1338,839 H1422"/>
</g>
<polygon points="665,859.5 673.5,865 665,870.5" fill="#c0c0c0"/>
<polygon points="1421.8,833 1429.7,839 1421.8,845" fill="#c0c0c0"/>
</svg>

<!-- payload node -->
<div class="a" style="left:-77px;top:751px;width:546px;height:206px;border:2px solid #383838;border-radius:26px;background:#1f1f1f;"></div>
<div class="t" style="left:152.5px;top:779.6px;font-size:32.4px;">Payload</div>
<div class="t g" style="left:141px;top:822.4px;font-size:28px;line-height:43.2px;">的輸入格式</div>
<div class="t" style="left:0;width:445px;text-align:right;top:852px;font-size:25.92px;font-weight:bold;">Success</div>
<div class="t" style="left:0;width:445px;text-align:right;top:903.5px;font-size:25.92px;font-weight:bold;">Failure</div>

<!-- http node -->
<div class="a" style="left:680px;top:733px;width:546px;height:259px;border:2px solid #383838;border-radius:26px;background:#1f1f1f;"></div>
<div class="a" style="left:707.4px;top:761.2px;width:52px;height:52px;border-radius:13.5px;background:#6c82e8;"></div>
<div class="t" style="left:786px;top:761.6px;font-size:32.4px;">HTTP Request</div>
<div class="t g" style="left:786px;top:804.4px;font-size:28px;line-height:43.2px;">透過HTTP協定發送請<br>求，用於串接外部API<br>以取得資料、webhook<br>等</div>
<div class="t" style="left:680px;width:522px;text-align:right;top:833.5px;font-size:25.92px;font-weight:bold;">Success</div>
<div class="t" style="left:680px;width:522px;text-align:right;top:885px;font-size:25.92px;font-weight:bold;">Failure</div>

<!-- response node -->
<div class="a" style="left:1436px;top:733px;width:547px;height:207px;border:2px solid #4d62e6;border-radius:26px;background:#1f1f1f;"></div>
<div class="a" style="left:1464.2px;top:761.2px;width:52px;height:52px;border-radius:13.5px;background:#6c82e8;"></div>
<div class="t" style="left:1543px;top:761.6px;font-size:32.4px;">Response</div>
<div class="t g" style="left:1543px;top:804.4px;font-size:28px;line-height:43.2px;">輸出回應</div>
<div class="t" style="left:1436px;width:522px;text-align:right;top:833px;font-size:25.92px;font-weight:bold;">Success</div>
<div class="t" style="left:1436px;width:522px;text-align:right;top:884.7px;font-size:25.92px;font-weight:bold;">Failure</div>

<svg style="left:0;top:0" width="3024" height="1714">
<g fill="#fff"><polygon points="733.30,769.50 740.70,776.90 737.30,780.30 733.30,776.50 729.30,780.30 725.90,776.90"/><polygon points="750.90,787.10 743.50,794.50 740.10,791.10 743.90,787.10 740.10,783.10 743.50,779.70"/><polygon points="733.30,804.70 725.90,797.30 729.30,793.90 733.30,797.70 737.30,793.90 740.70,797.30"/><polygon points="715.70,787.10 723.10,779.70 726.50,783.10 722.70,787.10 726.50,791.10 723.10,794.50"/><polygon points="733.30,782.90 737.50,787.10 733.30,791.30 729.10,787.10"/></g>
<path d="M-3.8,-8.3 L4.1,-2.6 L-2.3,3.5 L-9.4,-5.1 A10,10 0 0 0 5.34,8.46 L16.24,19.36 L19.36,16.24 L8.46,5.34 A10,10 0 0 0 -3.8,-8.3 Z" transform="translate(1484.2,781.9) scale(1.07)" fill="none" stroke="#fff" stroke-width="2.6" stroke-linejoin="round"/>
<g fill="#fff">
<circle cx="420" cy="785.7" r="3.1"/><circle cx="420" cy="795.9" r="3.1"/><circle cx="420" cy="806.1" r="3.1"/>
<circle cx="1177" cy="768.5" r="3.1"/><circle cx="1177" cy="778.7" r="3.1"/><circle cx="1177" cy="788.9" r="3.1"/>
<circle cx="1933" cy="768.5" r="3.1"/><circle cx="1933" cy="778.7" r="3.1"/><circle cx="1933" cy="788.9" r="3.1"/>
</g>
<g fill="#4f62e8" stroke="#161616" stroke-width="1.5">
<circle cx="473.5" cy="867" r="5"/><circle cx="473.5" cy="919" r="5"/>
<circle cx="679.5" cy="865" r="5"/><circle cx="1230.5" cy="850" r="5"/><circle cx="1230.5" cy="902" r="5"/>
<circle cx="1436" cy="839" r="5"/><circle cx="1987" cy="849.6" r="5"/><circle cx="1987" cy="901.5" r="5"/>
</g>
</svg>

<div class="a" style="left:208px;top:1554px;width:463px;height:112px;border-radius:24px;background:#1f1f1f;"></div>
<div class="a" style="left:735px;top:1554px;width:648px;height:112px;border-radius:24px;background:#1f1f1f;"></div>
<div class="t" style="left:313px;top:1595.9px;font-size:30px;">108%</div>
<svg style="left:0;top:0" width="3024" height="1714">
<g fill="none" stroke="#fff" stroke-width="2.7" stroke-linecap="round" stroke-linejoin="round">
<circle cx="266.7" cy="1608.7" r="10.6"/><line x1="261.8" y1="1608.7" x2="271.6" y2="1608.7" stroke-width="3"/><line x1="274.8" y1="1616.5" x2="280.6" y2="1622.2"/>
<circle cx="431.4" cy="1608.7" r="10.6"/><line x1="426.3" y1="1608.7" x2="436.5" y2="1608.7" stroke-width="3"/><line x1="431.4" y1="1603.8" x2="431.4" y2="1613.6" stroke-width="3"/><line x1="439.5" y1="1616.5" x2="445.3" y2="1622.2"/>
</g>
<line x1="478" y1="1578" x2="478" y2="1642" stroke="#3a3a3a" stroke-width="2"/>
<g stroke="#fff" stroke-width="2.8"><line x1="512.4" y1="1609.8" x2="533.4" y2="1609.8"/><line x1="523" y1="1599.4" x2="523" y2="1620.4"/></g>
<polygon points="593.6,1596.6 614.9,1609.8 593.6,1623.5" fill="#fff" stroke="#fff" stroke-width="1.5" stroke-linejoin="round"/>

<g fill="none" stroke="#fff" stroke-width="2.9" stroke-linejoin="miter">
<path d="M791.9,1622 H780.6 V1602.8 L792.6,1593.2 L804.5,1602.4 V1606.4"/>
<path d="M870.5,1619.4 H897.3 a2.5,2.5 0 0 0 2.5,-2.5 V1595.7 a2.5,2.5 0 0 0 -2.5,-2.5 H868.7 a2.5,2.5 0 0 0 -2.5,2.5 V1625.5 Z" stroke-linejoin="round"/>
<path d="M969.2,1604.2 H987.5 M980,1596.1 L988,1604.2 L980,1612.7"/>
<path d="M972.8,1615.4 H954.4 M962,1607.8 L954,1615.4 L962,1623.9"/>
<path d="M1046.1,1620.9 A14.7,14.7 0 0 1 1062,1597.4"/>
<path d="M1058.3,1592 L1064.2,1597.4 L1058.3,1602.9"/>
<path d="M1070,1601.8 Q1078,1611 1071.4,1621.1"/>
<circle cx="1142.3" cy="1605.1" r="9.5"/><line x1="1149.3" y1="1613.8" x2="1161.6" y2="1625.2"/>
</g>
<circle cx="804.5" cy="1619.4" r="8.6" fill="#fff"/>
<g stroke="#1f1f1f" stroke-width="2.4"><line x1="799.8" y1="1619.4" x2="809.2" y2="1619.4"/><line x1="804.5" y1="1614.7" x2="804.5" y2="1624.1"/></g>
<path d="M1053.2,1612.6 a5.7,5.7 0 1 1 11.4,0 q0,3 -5.7,9.6 q-5.7,-6.6 -5.7,-9.6 z" fill="#fff"/>
<rect x="1057.2" y="1624.6" width="3.6" height="1.8" fill="#fff"/>
<g fill="#fff"><polygon points="1235.00,1590.49 1243.12,1598.61 1239.39,1602.34 1235.00,1598.17 1230.61,1602.34 1226.88,1598.61"/><polygon points="1254.31,1609.80 1246.19,1617.92 1242.46,1614.19 1246.63,1609.80 1242.46,1605.41 1246.19,1601.68"/><polygon points="1235.00,1629.11 1226.88,1620.99 1230.61,1617.26 1235.00,1621.43 1239.39,1617.26 1243.12,1620.99"/><polygon points="1215.69,1609.80 1223.81,1601.68 1227.54,1605.41 1223.37,1609.80 1227.54,1614.19 1223.81,1617.92"/><polygon points="1235.00,1605.19 1239.61,1609.80 1235.00,1614.41 1230.39,1609.80"/></g>
<path d="M-3.8,-8.3 L4.1,-2.6 L-2.3,3.5 L-9.4,-5.1 A10,10 0 0 0 5.34,8.46 L16.24,19.36 L19.36,16.24 L8.46,5.34 A10,10 0 0 0 -3.8,-8.3 Z" transform="translate(1317.6,1605.1)" fill="none" stroke="#fff" stroke-width="2.7" stroke-linejoin="round"/>
</svg>

<!-- right panel -->
<div class="a" style="left:2160px;top:128px;width:843px;height:1565px;border:2px solid #333;border-radius:24px;background:#1f1f1f;overflow:hidden;">
<div class="a" style="left:0;top:145px;width:843px;height:2px;background:#333;"></div>
<div class="a" style="left:0;top:475px;width:843px;height:2px;background:#333;"></div>
<div class="a" style="left:0;top:1369.6px;width:843px;height:2px;background:#333;"></div>
<div class="a" style="left:47.5px;top:226.7px;width:743px;height:66px;border:2px solid #3a3a3a;border-radius:12px;"></div>
<div class="a" style="left:47.5px;top:370.7px;width:743px;height:66px;border:2px solid #3a3a3a;border-radius:12px;"></div>
<div class="a" style="left:47.5px;top:676.7px;width:235px;height:67px;border:2px solid #3a3a3a;border-radius:12px;"></div>
<div class="a" style="left:47.5px;top:764.8px;width:743px;height:456px;border:2px solid #3a3a3a;border-radius:12px;"></div>
<div class="a" style="left:49.5px;top:822px;width:743px;height:2px;background:#3a3a3a;"></div>
<div class="a" style="left:47.5px;top:1297px;width:71px;height:40px;border-radius:20px;background:#3c3c3c;"></div>
<div class="a" style="left:53px;top:1301px;width:32px;height:32px;border-radius:16px;background:#232323;"></div>
<div class="a" style="left:264.6px;top:1508px;width:527px;height:120px;border:2px solid #3a3a3a;border-radius:12px;"></div>
</div>

<div class="a" style="left:2336px;top:954.4px;width:620px;height:35.3px;box-sizing:border-box;border:2px solid #282828;border-right:none;"></div>
<div class="a" style="left:2928px;top:955px;width:2px;height:400px;background:#2c2c2c;"></div>
<div class="a" style="left:2336px;top:990px;width:2px;height:180px;background:#404040;"></div>
<div class="a" style="left:2365px;top:1062px;width:2px;height:71px;background:#404040;"></div>
<pre class="a" style="margin:0;left:2198.5px;top:955.1px;width:85px;text-align:right;font-family:'Liberation Mono',monospace;font-size:26px;letter-spacing:-1.2px;line-height:35.95px;color:#858585;"><span style="color:#c6c6c6">1</span>
2
3
4
5
6
7</pre>
<pre class="a" style="margin:0;left:2335.5px;top:955.1px;font-family:'Liberation Mono',monospace;font-size:26px;letter-spacing:-1.2px;line-height:35.95px;color:#d4d4d4;"><span style="color:#ffd700">(</span><span style="color:#da70d6">()</span> =&gt; <span style="color:#da70d6">{</span>
  <span style="color:#6a9955">// return the result of the expression</span>
  <span style="color:#569cd6">return</span> <span style="color:#179fff">{</span>
    text: httpResponse.json.todo,
    completed: httpResponse.json.completed
  <span style="color:#179fff">}</span>;
<span style="color:#da70d6">}</span><span style="color:#ffd700">)()</span></pre>

<div class="t" style="left:2210px;top:162.9px;font-size:31px;font-weight:bold;">Response</div>
<div class="t g" style="left:2210px;top:208px;font-size:28px;">輸出回應</div>
<div class="t" style="left:2210px;top:310px;font-size:28px;">Name</div>
<div class="t" style="left:2237px;top:378.1px;font-size:28px;">Response</div>
<div class="t" style="left:2210px;top:453.9px;font-size:28px;">Description</div>
<div class="t" style="left:2237px;top:522.5px;font-size:28px;">輸出回應</div>
<div class="t" style="left:2210px;top:643.3px;font-size:28px;">Properties</div>
<div class="t g" style="left:2210px;top:689.5px;font-size:24px;">編輯屬性</div>
<div class="t" style="left:2210px;top:751.3px;font-size:28px;letter-spacing:-1px;">Payload</div>
<div class="t" style="left:2237px;top:827.8px;font-size:28px;">Expression</div>
<div class="t" style="left:2237px;top:909.6px;font-size:28px;">Editor</div>
<div class="t" style="left:2210px;top:1376.3px;font-size:28px;letter-spacing:-1.1px;">isDebug</div>
<div class="t" style="left:2210px;top:1538.3px;font-size:28px;">Next Step</div>
<div class="t g" style="left:2210px;top:1585px;font-size:24px;">新增或選擇下一個節點</div>
<div class="t" style="left:2210px;top:1658.3px;font-size:28px;letter-spacing:-1px;">Success</div>
<div class="t" style="left:2632px;top:1659.5px;font-size:28px;font-weight:bold;">新增目標節點</div>

<svg style="left:0;top:0" width="3024" height="1714">
<g fill="none" stroke="#999" stroke-width="2.6" stroke-linejoin="round" stroke-linecap="round">
<path d="M2832.7,189.9 H2847.3 L2853.9,196.8 V211.4 a2.5,2.5 0 0 1 -2.5,2.5 H2832.7 a2.5,2.5 0 0 1 -2.5,-2.5 V192.4 a2.5,2.5 0 0 1 2.5,-2.5 Z"/>
<path d="M2835.5,190.5 V194 a2.5,2.5 0 0 0 2.5,2.5 H2846.1"/>
<path d="M2835.5,213.5 V206.1 a2.5,2.5 0 0 1 2.5,-2.5 H2845.8 a2.5,2.5 0 0 1 2.5,2.5 V213.5"/>
<path d="M2914,194 L2930.1,209.9 M2930.1,194 L2914,209.9" stroke-width="2.8"/>
<path d="M2402.7,838.5 L2407.9,833 L2413.2,838.5 M2402.7,845.3 L2407.9,850.9 L2413.2,845.3" stroke-width="2.2"/>
</g>
<circle cx="2309.0" cy="324.1" r="13.4" fill="none" stroke="#fff" stroke-width="2.6"/><circle cx="2309.0" cy="318.5" r="1.5" fill="#fff"/><path d="M2307.7,323.5 h1.3 v7.3" fill="none" stroke="#fff" stroke-width="2.3" stroke-linecap="round"/><circle cx="2374.3" cy="467.3" r="13.4" fill="none" stroke="#fff" stroke-width="2.6"/><circle cx="2374.3" cy="461.7" r="1.5" fill="#fff"/><path d="M2373.0,466.7 h1.3 v7.3" fill="none" stroke="#fff" stroke-width="2.3" stroke-linecap="round"/><circle cx="2348.3" cy="766.3" r="13.4" fill="none" stroke="#fff" stroke-width="2.6"/><circle cx="2348.3" cy="760.7" r="1.5" fill="#fff"/><path d="M2347.0,765.7 h1.3 v7.3" fill="none" stroke="#fff" stroke-width="2.3" stroke-linecap="round"/><circle cx="2329.3" cy="1392.0" r="13.4" fill="none" stroke="#fff" stroke-width="2.6"/><circle cx="2329.3" cy="1386.4" r="1.5" fill="#fff"/><path d="M2328.0,1391.4 h1.3 v7.3" fill="none" stroke="#fff" stroke-width="2.3" stroke-linecap="round"/>
<text x="2313" y="771" fill="#e5484d" font-family="Liberation Sans" font-size="28">*</text>
<g fill="none" stroke="#fff" stroke-width="2.3" stroke-linecap="butt" stroke-linejoin="miter">
<path d="M2916.6,914.4 H2910.8 V920.6 M2910.8,914.4 L2917.5,921.6"/>
<path d="M2923.5,914.4 H2929.3 V920.6 M2929.3,914.4 L2922.6,921.6"/>
<path d="M2916.6,933.5 H2910.8 V927.3 M2910.8,933.5 L2917.5,926.3"/>
<path d="M2923.5,933.5 H2929.3 V927.3 M2929.3,933.5 L2922.6,926.3"/>
</g>
<g stroke="#fff" stroke-width="2.6"><line x1="2589" y1="1673.5" x2="2610.7" y2="1673.5"/><line x1="2599.8" y1="1663" x2="2599.8" y2="1684"/></g>
</svg>

<div id="hdr" class="a">
<svg style="left:0;top:0" width="3024" height="110">
<g stroke="#5067e6" stroke-width="4" stroke-linecap="round"><line x1="70" y1="43" x2="106" y2="43"/><line x1="70" y1="55" x2="106" y2="55"/><line x1="70" y1="67" x2="106" y2="67"/></g>
<polygon points="160,73 182,37 204,73" fill="#5067e6"/>
<g stroke="#8c8c8c" stroke-width="3"><line x1="597.5" y1="39.5" x2="582.5" y2="70.5"/><line x1="803.5" y1="39.5" x2="788.5" y2="70.5"/><line x1="1007.5" y1="39.5" x2="992.5" y2="70.5"/></g>
<rect x="1191" y="24" width="382" height="62" rx="12" fill="none" stroke="#444" stroke-width="2"/>
<polyline points="1429,51 1434,46 1439,51" fill="none" stroke="#8c8c8c" stroke-width="2"/>
<polyline points="1429,59 1434,64 1439,59" fill="none" stroke="#8c8c8c" stroke-width="2"/>
<g fill="none" stroke="#5067e6" stroke-width="4" stroke-linecap="round">
<circle cx="2912" cy="46.5" r="10"/><path d="M2896,73 A16,16 0 0 1 2928,73"/>
<polyline points="2956,49 2968,60 2980,49" stroke-linejoin="round"/></g>
</svg>
<div class="t" style="left:221px;top:28px;font-size:56px;letter-spacing:1.6px;-webkit-text-stroke:1.4px #fff;">Asgard</div>
<div class="t" style="left:457px;top:39px;font-size:32px;">Project</div>
<div class="t" style="left:620px;top:39px;font-size:32px;">MyProject</div>
<div class="t" style="left:826px;top:39px;font-size:32px;">Collection</div>
<div class="t" style="left:1030px;top:39px;font-size:32px;">MyTool</div>
<div class="t" style="left:1313px;top:40px;font-size:28px;">MyTool</div>
<div class="t g" style="left:2732px;top:40px;font-size:30px;">AsgardAI</div>
</div>
<div id="side" class="a"></div>
<div class="a" style="left:31px;top:160px;width:96px;height:64px;border-radius:12px;background:#272b45;"></div>
<svg style="left:0;top:0" width="160" height="1714">
<g fill="none" stroke="#5067e6" stroke-width="2.8" stroke-linejoin="miter">
<path d="M67.4,188.9 V180.2 H74.5 L77.3,183.3 H90.5 V188.2"/><path d="M64.4,188.9 H93.5 L90.2,203.7 H67.6 Z"/></g>
<g fill="none" stroke="#8c8c8c" stroke-width="2.8">
<path d="M66.5,315 V292.5 a3,3 0 0 1 3,-3 H86.5 V312 H69.5 a3,3 0 0 0 0,6.5 H92.6 V291.2"/><path d="M73,290.5 V311"/>
<path d="M79,423 V404.5 M72.6,410.6 L79,404.2 L85.4,410.6" stroke-linecap="butt"/>
<path d="M66.4,421.9 V428.5 H91.5 V421.9"/>
<line x1="63" y1="520.4" x2="95" y2="520.4"/><line x1="63" y1="535.3" x2="95" y2="535.3"/>
<circle cx="85.3" cy="520.4" r="5.2" fill="#1f1f1f"/><circle cx="73.3" cy="535.3" r="5.2" fill="#1f1f1f"/>
</g>
<g fill="#8c8c8c"><rect x="65" y="625.8" width="5.2" height="5.2"/><rect x="76.4" y="625.8" width="5.2" height="5.2"/><rect x="87.8" y="625.8" width="5.2" height="5.2"/>
<rect x="65" y="637.4" width="5.2" height="5.2"/><rect x="76.4" y="637.4" width="5.2" height="5.2"/><rect x="87.8" y="637.4" width="5.2" height="5.2"/>
<rect x="65" y="648.8" width="5.2" height="5.2"/><rect x="76.4" y="648.8" width="5.2" height="5.2"/><rect x="87.8" y="648.8" width="5.2" height="5.2"/></g>
<g fill="none" stroke="#8c8c8c" stroke-width="4" stroke-linecap="round">
<circle cx="79.2" cy="1482.2" r="20"/>
<path d="M73,1478.6 A6,6 0 1 1 82.86,1483.2 Q79.2,1484.2 79.2,1486"/>
<path d="M79.0,1574.0 L79.7,1574.0 L80.4,1574.1 L81.1,1574.2 L81.7,1574.5 L82.4,1575.0 L82.9,1575.8 L83.2,1577.0 L83.4,1578.5 L83.6,1579.8 L83.9,1580.6 L84.2,1581.1 L84.6,1581.5 L85.0,1581.7 L85.4,1582.0 L85.8,1582.2 L86.2,1582.5 L86.6,1582.7 L87.1,1582.9 L87.6,1583.0 L88.2,1583.1 L89.0,1582.9 L90.2,1582.4 L91.6,1581.9 L92.8,1581.5 L93.8,1581.6 L94.5,1581.9 L95.1,1582.3 L95.5,1582.8 L96.0,1583.4 L96.3,1584.0 L96.6,1584.6 L96.9,1585.3 L97.2,1585.9 L97.3,1586.6 L97.2,1587.4 L96.7,1588.2 L95.8,1589.2 L94.6,1590.1 L93.6,1590.9 L93.1,1591.5 L92.8,1592.1 L92.7,1592.6 L92.6,1593.0 L92.6,1593.5 L92.6,1594.0 L92.6,1594.5 L92.6,1595.0 L92.7,1595.4 L92.8,1595.9 L93.1,1596.5 L93.6,1597.1 L94.6,1597.9 L95.8,1598.8 L96.7,1599.8 L97.2,1600.6 L97.3,1601.4 L97.2,1602.1 L96.9,1602.7 L96.6,1603.4 L96.3,1604.0 L96.0,1604.6 L95.5,1605.2 L95.1,1605.7 L94.5,1606.1 L93.8,1606.4 L92.8,1606.5 L91.6,1606.1 L90.2,1605.6 L89.0,1605.1 L88.2,1604.9 L87.6,1605.0 L87.1,1605.1 L86.6,1605.3 L86.2,1605.5 L85.8,1605.8 L85.4,1606.0 L85.0,1606.3 L84.6,1606.5 L84.2,1606.9 L83.9,1607.4 L83.6,1608.2 L83.4,1609.5 L83.2,1611.0 L82.9,1612.2 L82.4,1613.0 L81.7,1613.5 L81.1,1613.8 L80.4,1613.9 L79.7,1614.0 L79.0,1614.0 L78.3,1614.0 L77.6,1613.9 L76.9,1613.8 L76.3,1613.5 L75.6,1613.0 L75.1,1612.2 L74.8,1611.0 L74.6,1609.5 L74.4,1608.2 L74.1,1607.4 L73.8,1606.9 L73.4,1606.5 L73.0,1606.3 L72.6,1606.0 L72.2,1605.8 L71.8,1605.5 L71.4,1605.3 L70.9,1605.1 L70.4,1605.0 L69.8,1604.9 L69.0,1605.1 L67.8,1605.6 L66.4,1606.1 L65.2,1606.5 L64.2,1606.4 L63.5,1606.1 L62.9,1605.7 L62.5,1605.2 L62.0,1604.6 L61.7,1604.0 L61.4,1603.4 L61.1,1602.7 L60.8,1602.1 L60.7,1601.4 L60.8,1600.6 L61.3,1599.8 L62.2,1598.8 L63.4,1597.9 L64.4,1597.1 L64.9,1596.5 L65.2,1595.9 L65.3,1595.4 L65.4,1595.0 L65.4,1594.5 L65.4,1594.0 L65.4,1593.5 L65.4,1593.0 L65.3,1592.6 L65.2,1592.1 L64.9,1591.5 L64.4,1590.9 L63.4,1590.1 L62.2,1589.2 L61.3,1588.2 L60.8,1587.4 L60.7,1586.6 L60.8,1585.9 L61.1,1585.3 L61.4,1584.6 L61.7,1584.0 L62.0,1583.4 L62.5,1582.8 L62.9,1582.3 L63.5,1581.9 L64.2,1581.6 L65.2,1581.5 L66.4,1581.9 L67.8,1582.4 L69.0,1582.9 L69.8,1583.1 L70.4,1583.0 L70.9,1582.9 L71.4,1582.7 L71.8,1582.5 L72.2,1582.2 L72.6,1582.0 L73.0,1581.7 L73.4,1581.5 L73.8,1581.1 L74.1,1580.6 L74.4,1579.8 L74.6,1578.5 L74.8,1577.0 L75.1,1575.8 L75.6,1575.0 L76.3,1574.5 L76.9,1574.2 L77.6,1574.1 L78.3,1574.0Z" stroke-width="4" stroke-linejoin="round"/>
<circle cx="79" cy="1594" r="6.5"/>
</g>
<circle cx="79.2" cy="1491.4" r="2.3" fill="#8c8c8c"/>
</svg>
<div class="t" style="left:0;width:158px;text-align:center;top:227.7px;font-size:24px;color:#5067e6;">Workflows</div>
<div class="t g" style="left:0;width:158px;text-align:center;top:339.7px;font-size:24px;">Knowledge</div>
<div class="t g" style="left:0;width:158px;text-align:center;top:451.7px;font-size:24px;">Environment</div>
<div class="t g" style="left:0;width:158px;text-align:center;top:563.7px;font-size:24px;">Settings</div>
<div class="t g" style="left:0;width:158px;text-align:center;top:675.7px;font-size:24px;">Apps</div>
<div class="t g" style="left:0;width:158px;text-align:center;top:1517.7px;font-size:24px;">Help</div>
<div class="t g" style="left:0;width:158px;text-align:center;top:1629.7px;font-size:24px;">Workspace</div>

<div class="a" style="left:0;top:0;width:3024px;height:1714px;box-sizing:border-box;border:1px solid #3d3d3d;border-top:none;border-radius:0 0 16px 16px;"></div>
</div></body></html>
